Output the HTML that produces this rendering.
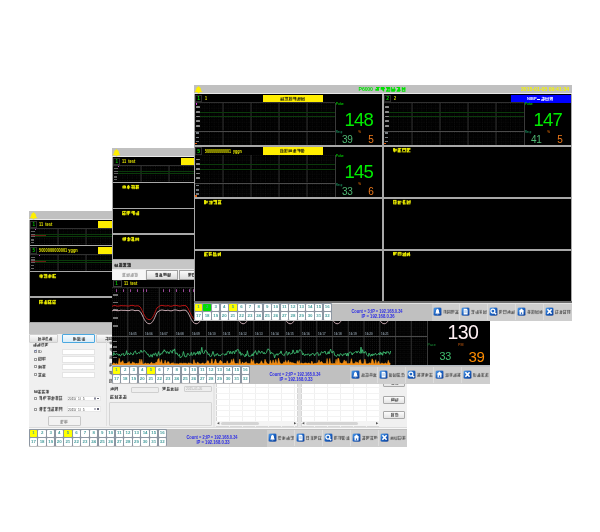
<!DOCTYPE html><html><head><meta charset="utf-8"><style>
html,body{margin:0;padding:0;background:#fff;width:600px;height:532px;overflow:hidden;}
body{position:relative;font-family:"Liberation Sans",sans-serif;}
.win{position:absolute;width:378px;height:236px;overflow:hidden;will-change:transform;}
.t{position:absolute;white-space:nowrap;line-height:1;}
.cj{position:absolute;background:repeating-linear-gradient(90deg,var(--c) 0 calc(var(--cw) - 1px),transparent calc(var(--cw) - 1px) var(--cw));opacity:.6;}
.cjx{display:inline-block;height:0.75em;background:repeating-linear-gradient(90deg,currentColor 0 4.5px,transparent 4.5px 6px);vertical-align:-0.05em;}
.cn{position:absolute;left:0;top:1.5px;width:100%;text-align:center;font-size:4.4px;font-weight:bold;line-height:1;color:#4aa0a0;}
</style></head><body>
<div class="win" style="left:29px;top:211px;"><div style="position:absolute;left:0px;top:0px;width:378px;height:236px;background:#c0c0c0;"></div><div style="position:absolute;left:0px;top:0px;width:378px;height:8.5px;background:#c0c0c0;"></div><div style="position:absolute;left:0px;top:8.2px;width:378px;height:1px;background:#e8e8e8;"></div><svg style="position:absolute;left:-0.3px;top:0.4px;overflow:visible" width="9" height="9" viewBox="0 0 9 9"><path d="M4.5 0.7 L5.1 1.6 C6.6 2 7.1 3.4 7.3 4.8 C7.5 5.9 8.1 6.5 8.7 7 L8.7 7.6 L5.7 7.6 C5.5 8.3 5.1 8.6 4.5 8.6 C3.9 8.6 3.5 8.3 3.3 7.6 L0.3 7.6 L0.3 7 C0.9 6.5 1.5 5.9 1.7 4.8 C1.9 3.4 2.4 2 3.9 1.6Z" fill="#fff000" stroke="#aab0f0" stroke-width="0.45"/></svg><div style="position:absolute;left:0px;top:9.2px;width:378px;height:103px;background:#a8a8a8;"></div><div style="position:absolute;left:1px;top:9.3px;width:187px;height:24.5px;background:#000;"></div><div style="position:absolute;left:0.7px;top:9.9px;width:7.8px;height:7.4px;border:0.8px solid #2e2e2e;box-sizing:border-box;"></div><div class="t" style="left:3.4px;top:11.9px;font-size:4.6px;color:#00c000;font-weight:bold;">1</div><div class="t" style="left:10.2px;top:12.0px;font-size:4.9px;color:#e8e800;font-weight:bold;transform:scaleX(0.8);transform-origin:0 0;">11&nbsp;&nbsp;test</div><div style="position:absolute;left:69px;top:9.8px;width:60px;height:7.6px;background:#ffee00;"></div><div style="position:absolute;left:1px;top:17.4px;width:187px;height:0.6px;background:#303030;"></div><svg style="position:absolute;left:1px;top:18.0px" width="187" height="15.8" viewBox="0 0 187 15.8"><defs><pattern id="gp1" patternUnits="userSpaceOnUse" width="4.67" height="4.67"><rect x="0" y="0" width="0.9" height="0.9" fill="#171717"/><rect x="2.335" y="0" width="0.9" height="0.9" fill="#171717"/><rect x="0" y="2.335" width="0.9" height="0.9" fill="#171717"/><rect x="2.335" y="2.335" width="0.9" height="0.9" fill="#171717" opacity="0.5"/></pattern></defs><rect width="187" height="15.8" fill="#000"/><rect width="187" height="15.8" fill="url(#gp1)"/><rect x="27.50" y="0" width="1" height="15.8" fill="#333333"/><rect x="55.50" y="0" width="1" height="15.8" fill="#333333"/><rect x="83.50" y="0" width="1" height="15.8" fill="#333333"/><rect x="111.50" y="0" width="1" height="15.8" fill="#333333"/><rect x="139.50" y="0" width="1" height="15.8" fill="#333333"/><rect x="167.50" y="0" width="1" height="15.8" fill="#333333"/></svg><div style="position:absolute;left:6px;top:22.8px;width:182px;height:0.8px;background:#0b3a0b;"></div><div style="position:absolute;left:6px;top:25.3px;width:182px;height:0.8px;background:#0b3a0b;"></div><div style="position:absolute;left:2px;top:23.8px;width:15px;height:0.7px;background:#6a1414;"></div><div style="position:absolute;left:6px;top:18.3px;width:1px;height:1px;background:#c050c0;"></div><div style="position:absolute;left:1.6px;top:19.8px;width:4.5px;height:1.3px;background:#8a8a8a;opacity:.7"></div><div style="position:absolute;left:1.6px;top:22.6px;width:4.5px;height:1.3px;background:#8a8a8a;opacity:.7"></div><div style="position:absolute;left:1.6px;top:25.1px;width:4.5px;height:1.3px;background:#8a8a8a;opacity:.7"></div><div style="position:absolute;left:1.6px;top:28.3px;width:3.5px;height:1.3px;background:#8a8a8a;opacity:.7"></div><div style="position:absolute;left:1.6px;top:30.8px;width:3.5px;height:1.3px;background:#8a8a8a;opacity:.7"></div><div style="position:absolute;left:190px;top:9.3px;width:187px;height:24.5px;background:#000;"></div><div style="position:absolute;left:1px;top:35.1px;width:187px;height:24.5px;background:#000;"></div><div style="position:absolute;left:0.7px;top:35.7px;width:7.8px;height:7.4px;border:0.8px solid #2e2e2e;box-sizing:border-box;"></div><div class="t" style="left:3.4px;top:37.7px;font-size:4.6px;color:#00c000;font-weight:bold;">5</div><div class="t" style="left:10.2px;top:37.800000000000004px;font-size:4.9px;color:#e8e800;font-weight:bold;transform:scaleX(0.8);transform-origin:0 0;">5000000000001&nbsp;yggn</div><div style="position:absolute;left:69px;top:35.6px;width:60px;height:7.6px;background:#ffee00;"></div><div style="position:absolute;left:1px;top:43.2px;width:187px;height:0.6px;background:#303030;"></div><svg style="position:absolute;left:1px;top:43.8px" width="187" height="15.8" viewBox="0 0 187 15.8"><defs><pattern id="gp2" patternUnits="userSpaceOnUse" width="4.67" height="4.67"><rect x="0" y="0" width="0.9" height="0.9" fill="#171717"/><rect x="2.335" y="0" width="0.9" height="0.9" fill="#171717"/><rect x="0" y="2.335" width="0.9" height="0.9" fill="#171717"/><rect x="2.335" y="2.335" width="0.9" height="0.9" fill="#171717" opacity="0.5"/></pattern></defs><rect width="187" height="15.8" fill="#000"/><rect width="187" height="15.8" fill="url(#gp2)"/><rect x="27.50" y="0" width="1" height="15.8" fill="#333333"/><rect x="55.50" y="0" width="1" height="15.8" fill="#333333"/><rect x="83.50" y="0" width="1" height="15.8" fill="#333333"/><rect x="111.50" y="0" width="1" height="15.8" fill="#333333"/><rect x="139.50" y="0" width="1" height="15.8" fill="#333333"/><rect x="167.50" y="0" width="1" height="15.8" fill="#333333"/></svg><div style="position:absolute;left:6px;top:48.6px;width:182px;height:0.8px;background:#0b3a0b;"></div><div style="position:absolute;left:6px;top:51.1px;width:182px;height:0.8px;background:#0b3a0b;"></div><div style="position:absolute;left:2px;top:49.6px;width:15px;height:0.7px;background:#6a1414;"></div><div style="position:absolute;left:10px;top:44.1px;width:1px;height:1px;background:#c050c0;"></div><div style="position:absolute;left:1.6px;top:45.6px;width:4.5px;height:1.3px;background:#8a8a8a;opacity:.7"></div><div style="position:absolute;left:1.6px;top:48.400000000000006px;width:4.5px;height:1.3px;background:#8a8a8a;opacity:.7"></div><div style="position:absolute;left:1.6px;top:50.900000000000006px;width:4.5px;height:1.3px;background:#8a8a8a;opacity:.7"></div><div style="position:absolute;left:1.6px;top:54.1px;width:3.5px;height:1.3px;background:#8a8a8a;opacity:.7"></div><div style="position:absolute;left:1.6px;top:56.6px;width:3.5px;height:1.3px;background:#8a8a8a;opacity:.7"></div><div style="position:absolute;left:190px;top:35.1px;width:187px;height:24.5px;background:#000;"></div><div style="position:absolute;left:1px;top:60.9px;width:187px;height:24.5px;background:#000;"></div><svg style="position:absolute;left:10px;top:62.699999999999996px;overflow:visible;opacity:1.0;filter:blur(0.25px);" width="17.6" height="4.2" viewBox="0 0 17.6 4.2"><path d="M0.26 1.26H3.87M0.26 2.10H3.87M0.26 2.94H3.87M2.79 0.84V4.20M2.07 0.00V4.20M4.66 0.42H8.27M5.21 3.78H7.73M4.66 1.26H7.73M7.19 0.00V3.36M7.91 0.84V4.20M5.02 3.99L6.47 1.68M9.06 2.94H12.67M9.61 1.26H12.67M9.61 2.10H12.67M10.15 0.84V4.20M10.87 0.00V4.20M13.46 3.78H17.07M14.01 0.42H17.07M13.46 2.94H17.07M13.82 0.00V3.36M14.55 0.00V3.36M13.82 3.99L15.27 1.68" stroke="#eeee00" stroke-width="0.92" fill="none"/></svg><div style="position:absolute;left:190px;top:60.9px;width:187px;height:24.5px;background:#000;"></div><div style="position:absolute;left:1px;top:86.7px;width:187px;height:24.5px;background:#000;"></div><svg style="position:absolute;left:10px;top:88.5px;overflow:visible;opacity:1.0;filter:blur(0.25px);" width="17.6" height="4.2" viewBox="0 0 17.6 4.2"><path d="M0.26 2.10H3.87M0.26 2.94H3.87M0.26 0.42H3.87M2.79 0.00V4.20M0.62 0.00V4.20M5.21 3.78H8.27M5.21 2.10H7.73M4.66 2.94H8.27M7.91 0.00V4.20M6.47 0.00V4.20M9.06 3.78H12.67M9.06 2.94H12.67M9.61 0.42H12.67M9.42 0.00V3.36M11.59 0.00V4.20M9.42 3.99L10.87 1.68M14.01 0.42H17.07M14.01 2.94H16.53M13.46 3.78H16.53M13.82 0.00V3.36M15.99 0.00V4.20M13.82 3.99L15.27 1.68" stroke="#eeee00" stroke-width="0.92" fill="none"/></svg><div style="position:absolute;left:190px;top:86.7px;width:187px;height:24.5px;background:#000;"></div><div style="position:absolute;left:0px;top:112px;width:378px;height:10.5px;background:#c2c2c2;"></div><div style="position:absolute;left:0px;top:122.5px;width:378px;height:94.5px;background:#f0f0f0;"></div><div style="position:absolute;left:0.2px;top:123.0px;width:29px;height:8.8px;background:linear-gradient(#fbfbfb,#e0e0e0);border:0.6px solid #cfcfcf;box-sizing:border-box;border-radius:1px;"></div><svg style="position:absolute;left:9px;top:125.5px;overflow:visible;opacity:1.0;filter:blur(0.25px);" width="14.4" height="3.6" viewBox="0 0 14.4 3.6"><path d="M0.66 1.08H2.73M0.66 1.80H3.17M0.22 3.24H3.17M0.51 0.00V3.60M2.28 0.72V2.88M0.51 3.42L1.69 1.44M4.26 1.80H6.33M4.26 0.36H6.77M3.82 2.52H6.77M6.47 0.72V2.88M5.29 0.72V3.60M7.42 3.24H10.37M7.86 1.08H9.93M7.86 0.36H9.93M8.89 0.00V2.88M7.71 0.72V2.88M11.46 3.24H13.97M11.02 1.80H13.97M11.02 2.52H13.97M13.67 0.00V3.60M12.49 0.00V2.88M11.31 3.42L12.49 1.44" stroke="#444" stroke-width="0.60" fill="none"/></svg><div style="position:absolute;left:33px;top:122.6px;width:33px;height:9.6px;background:linear-gradient(#f4fbff,#d8ecf8);border:0.8px solid #4aa8e0;box-sizing:border-box;border-radius:1px;"></div><svg style="position:absolute;left:43.5px;top:125.6px;overflow:visible;opacity:1.0;filter:blur(0.25px);" width="12.6" height="3.8" viewBox="0 0 12.6 3.8"><path d="M0.77 1.14H3.18M0.77 2.66H3.70M0.25 1.90H3.18M1.29 0.00V3.80M0.60 0.00V3.80M4.45 3.42H7.90M4.45 1.90H7.90M4.45 0.38H7.38M6.17 0.76V3.80M4.80 0.00V3.80M4.80 3.61L6.17 1.52M8.65 2.66H12.10M8.65 1.14H12.10M9.17 3.42H12.10M11.06 0.00V3.80M10.37 0.76V3.80" stroke="#444" stroke-width="0.62" fill="none"/></svg><div style="position:absolute;left:67px;top:123.0px;width:30px;height:8.8px;background:linear-gradient(#fbfbfb,#e0e0e0);border:0.6px solid #cfcfcf;box-sizing:border-box;border-radius:1px;"></div><svg style="position:absolute;left:75.5px;top:125.5px;overflow:visible;opacity:1.0;filter:blur(0.25px);" width="11.4" height="3.6" viewBox="0 0 11.4 3.6"><path d="M0.23 2.52H3.34M0.70 3.24H2.88M0.70 0.36H3.34M2.41 0.00V2.88M3.03 0.00V3.60M4.50 0.36H7.14M4.50 1.80H6.68M4.03 2.52H6.68M6.83 0.00V3.60M4.34 0.00V2.88M7.83 3.24H10.94M8.30 1.08H10.94M7.83 1.80H10.94M10.63 0.72V3.60M8.14 0.00V3.60" stroke="#444" stroke-width="0.62" fill="none"/></svg><svg style="position:absolute;left:4px;top:131.6px;overflow:visible;opacity:1.0;filter:blur(0.25px);" width="15.6" height="3.6" viewBox="0 0 15.6 3.6"><path d="M0.23 1.80H2.95M0.23 2.52H3.43M0.23 3.24H3.43M3.11 0.00V2.88M2.47 0.00V3.60M4.61 1.80H7.33M4.13 3.24H7.33M4.13 2.52H6.85M7.01 0.00V2.88M6.37 0.00V2.88M4.45 3.42L5.73 1.44M8.51 3.24H10.75M8.51 0.36H11.23M8.51 1.08H10.75M10.27 0.00V2.88M8.35 0.72V2.88M12.41 1.08H15.13M12.41 0.36H15.13M12.41 2.52H14.65M12.25 0.00V3.60M13.53 0.00V2.88M12.25 3.42L13.53 1.44" stroke="#444" stroke-width="0.62" fill="none"/></svg><div style="position:absolute;left:5px;top:139.0px;width:3px;height:3px;border:0.5px solid #9a9a9a;background:#fafafa;box-sizing:border-box;"></div><div class="t" style="left:4.6px;top:138.2px;font-size:4px;color:#3050c0;">&#10003;</div><div class="t" style="left:9px;top:138.5px;font-size:4px;color:#222;">ID</div><div style="position:absolute;left:33px;top:137.7px;width:33px;height:6.4px;background:#fff;border:0.5px solid #e4e4e4;box-sizing:border-box;"></div><div style="position:absolute;left:5px;top:146.7px;width:3px;height:3px;border:0.5px solid #9a9a9a;background:#fafafa;box-sizing:border-box;"></div><svg style="position:absolute;left:9px;top:146.39999999999998px;overflow:visible;opacity:1.0;filter:blur(0.25px);" width="8.2" height="3.8" viewBox="0 0 8.2 3.8"><path d="M0.25 0.38H3.61M0.25 3.42H3.10M0.25 1.90H3.61M3.27 0.00V3.80M0.58 0.76V3.04M0.58 3.61L1.93 1.52M4.85 2.66H7.71M4.85 1.14H7.71M4.85 0.38H7.71M4.68 0.00V3.04M5.35 0.76V3.80" stroke="#444" stroke-width="0.62" fill="none"/></svg><div style="position:absolute;left:33px;top:145.39999999999998px;width:33px;height:6.4px;background:#fff;border:0.5px solid #e4e4e4;box-sizing:border-box;"></div><div style="position:absolute;left:5px;top:154.4px;width:3px;height:3px;border:0.5px solid #9a9a9a;background:#fafafa;box-sizing:border-box;"></div><svg style="position:absolute;left:9px;top:154.1px;overflow:visible;opacity:1.0;filter:blur(0.25px);" width="8.2" height="3.8" viewBox="0 0 8.2 3.8"><path d="M0.25 1.14H3.61M0.75 2.66H3.61M0.25 1.90H3.61M1.25 0.00V3.80M3.27 0.76V3.80M0.58 3.61L1.93 1.52M4.85 1.14H7.20M4.35 2.66H7.20M4.35 0.38H7.71M5.35 0.00V3.80M6.70 0.00V3.80" stroke="#444" stroke-width="0.62" fill="none"/></svg><div style="position:absolute;left:33px;top:153.1px;width:33px;height:6.4px;background:#fff;border:0.5px solid #e4e4e4;box-sizing:border-box;"></div><div style="position:absolute;left:5px;top:162.1px;width:3px;height:3px;border:0.5px solid #9a9a9a;background:#fafafa;box-sizing:border-box;"></div><svg style="position:absolute;left:9px;top:161.79999999999998px;overflow:visible;opacity:1.0;filter:blur(0.25px);" width="8.2" height="3.8" viewBox="0 0 8.2 3.8"><path d="M0.25 3.42H3.61M0.75 2.66H3.10M0.25 0.38H3.61M1.25 0.00V3.80M2.60 0.00V3.04M4.85 3.42H7.71M4.85 1.14H7.71M4.85 2.66H7.20M6.03 0.00V3.80M4.68 0.76V3.80M4.68 3.61L6.03 1.52" stroke="#444" stroke-width="0.62" fill="none"/></svg><div style="position:absolute;left:33px;top:160.79999999999998px;width:33px;height:6.4px;background:#fff;border:0.5px solid #e4e4e4;box-sizing:border-box;"></div><svg style="position:absolute;left:5px;top:178.7px;overflow:visible;opacity:1.0;filter:blur(0.25px);" width="15.6" height="3.6" viewBox="0 0 15.6 3.6"><path d="M0.23 1.08H3.43M0.71 1.80H3.43M0.71 2.52H3.43M3.11 0.00V2.88M0.55 0.00V2.88M4.13 2.52H6.85M4.13 0.36H7.33M4.61 3.24H7.33M5.09 0.72V3.60M5.73 0.00V3.60M4.45 3.42L5.73 1.44M8.03 0.36H11.23M8.03 2.52H11.23M8.03 3.24H11.23M9.63 0.00V2.88M8.35 0.00V3.60M12.41 2.52H14.65M11.93 1.08H15.13M11.93 0.36H14.65M14.17 0.72V3.60M13.53 0.00V3.60M12.25 3.42L13.53 1.44" stroke="#444" stroke-width="0.62" fill="none"/></svg><div style="position:absolute;left:5px;top:185.8px;width:3px;height:3px;border:0.5px solid #9a9a9a;background:#fafafa;box-sizing:border-box;"></div><svg style="position:absolute;left:10.4px;top:185.10000000000002px;overflow:visible;opacity:1.0;filter:blur(0.25px);" width="23.7" height="4.3" viewBox="0 0 23.7 4.3"><path d="M0.24 1.29H2.99M0.24 0.43H2.99M0.24 3.01H3.48M2.50 0.86V4.30M1.86 0.00V3.44M4.19 1.29H7.43M4.19 2.15H6.94M4.67 0.43H7.43M4.51 0.86V3.44M5.16 0.86V4.30M8.62 3.01H11.38M8.14 0.43H11.38M8.62 2.15H11.38M11.05 0.00V3.44M9.76 0.00V4.30M12.57 3.87H14.84M12.09 1.29H15.33M12.57 2.15H15.33M13.71 0.00V4.30M15.00 0.86V3.44M12.41 4.08L13.71 1.72M16.52 0.43H19.28M16.52 1.29H19.28M16.04 3.01H19.28M17.66 0.00V4.30M18.30 0.86V4.30M20.47 3.01H23.23M19.99 0.43H23.23M19.99 3.87H23.23M22.25 0.00V3.44M20.31 0.00V4.30" stroke="#444" stroke-width="0.62" fill="none"/></svg><div style="position:absolute;left:38px;top:184.5px;width:34px;height:5.8px;background:#fff;border:0.5px solid #e8e8e8;box-sizing:border-box;"></div><div class="t" style="left:39.3px;top:186.10000000000002px;font-size:3.9px;color:#3a3a3a;transform:scaleX(0.85);transform-origin:0 0;">2015/&nbsp;&nbsp;1/&nbsp;&nbsp;5</div><div style="position:absolute;left:64.8px;top:185.8px;width:2.6px;height:2.8px;border:0.5px solid #889;border-radius:1px;box-sizing:border-box;"></div><div style="position:absolute;left:68px;top:186.70000000000002px;width:2px;height:1.2px;background:#667;"></div><div style="position:absolute;left:5px;top:196.5px;width:3px;height:3px;border:0.5px solid #9a9a9a;background:#fafafa;box-sizing:border-box;"></div><svg style="position:absolute;left:10.4px;top:195.8px;overflow:visible;opacity:1.0;filter:blur(0.25px);" width="23.7" height="4.3" viewBox="0 0 23.7 4.3"><path d="M0.72 0.43H3.48M0.24 1.29H3.48M0.24 2.15H3.48M2.50 0.00V4.30M1.86 0.00V4.30M0.56 4.08L1.86 1.72M4.67 3.87H6.94M4.67 0.43H7.43M4.67 1.29H6.94M5.16 0.00V4.30M5.81 0.00V4.30M8.62 3.87H11.38M8.14 1.29H10.89M8.62 0.43H10.89M10.40 0.86V3.44M11.05 0.00V4.30M12.09 3.01H14.84M12.57 3.87H15.33M12.57 0.43H15.33M14.35 0.00V3.44M13.06 0.86V4.30M12.41 4.08L13.71 1.72M16.04 3.01H19.28M16.04 0.43H19.28M16.04 1.29H19.28M17.66 0.00V4.30M17.01 0.00V3.44M16.36 4.08L17.66 1.72M19.99 1.29H23.23M19.99 0.43H23.23M20.47 2.15H22.74M20.31 0.00V4.30M22.90 0.00V4.30" stroke="#444" stroke-width="0.62" fill="none"/></svg><div style="position:absolute;left:38px;top:195.2px;width:34px;height:5.8px;background:#fff;border:0.5px solid #e8e8e8;box-sizing:border-box;"></div><div class="t" style="left:39.3px;top:196.8px;font-size:3.9px;color:#3a3a3a;transform:scaleX(0.85);transform-origin:0 0;">2015/&nbsp;&nbsp;1/&nbsp;&nbsp;5</div><div style="position:absolute;left:64.8px;top:196.5px;width:2.6px;height:2.8px;border:0.5px solid #889;border-radius:1px;box-sizing:border-box;"></div><div style="position:absolute;left:68px;top:197.4px;width:2px;height:1.2px;background:#667;"></div><div style="position:absolute;left:19px;top:204.6px;width:32.5px;height:10.6px;background:#f2f2f2;border:0.7px solid #c8c8c8;box-sizing:border-box;border-radius:1px;"></div><svg style="position:absolute;left:31px;top:208.6px;overflow:visible;opacity:1.0;filter:blur(0.25px);" width="8.0" height="3.6" viewBox="0 0 8.0 3.6"><path d="M0.73 3.24H3.03M0.24 1.08H3.52M0.73 0.36H3.52M1.88 0.00V3.60M1.22 0.72V3.60M0.57 3.42L1.88 1.44M4.24 2.52H7.52M4.24 0.36H7.52M4.24 1.80H7.52M5.22 0.72V3.60M5.88 0.72V3.60" stroke="#999" stroke-width="0.80" fill="none"/></svg><div style="position:absolute;left:76.6px;top:129px;width:0.9px;height:86px;background:#e0e0e0;"></div><svg style="position:absolute;left:80.3px;top:130.4px;overflow:visible;opacity:1.0;filter:blur(0.25px);" width="4.2" height="3.8" viewBox="0 0 4.2 3.8"><path d="M0.77 1.14H3.18M0.25 1.90H3.70M0.77 2.66H3.18M3.35 0.00V3.04M1.97 0.76V3.80" stroke="#555" stroke-width="0.60" fill="none"/></svg><svg style="position:absolute;left:80.3px;top:137.1px;overflow:visible;opacity:1.0;filter:blur(0.25px);" width="4.2" height="3.8" viewBox="0 0 4.2 3.8"><path d="M0.77 1.90H3.18M0.77 0.38H3.18M0.77 1.14H3.18M1.97 0.00V3.04M2.66 0.00V3.80" stroke="#555" stroke-width="0.60" fill="none"/></svg><svg style="position:absolute;left:80.3px;top:144.4px;overflow:visible;opacity:1.0;filter:blur(0.25px);" width="4.2" height="3.8" viewBox="0 0 4.2 3.8"><path d="M0.25 1.14H3.18M0.77 3.42H3.18M0.25 2.66H3.18M1.97 0.00V3.04M2.66 0.76V3.80M0.60 3.61L1.97 1.52" stroke="#555" stroke-width="0.60" fill="none"/></svg><svg style="position:absolute;left:80.3px;top:152.29999999999998px;overflow:visible;opacity:1.0;filter:blur(0.25px);" width="4.2" height="3.8" viewBox="0 0 4.2 3.8"><path d="M0.25 2.66H3.70M0.77 0.38H3.18M0.25 1.90H3.18M1.29 0.76V3.80M1.97 0.00V3.04M0.60 3.61L1.97 1.52" stroke="#555" stroke-width="0.60" fill="none"/></svg><svg style="position:absolute;left:80.3px;top:160.29999999999998px;overflow:visible;opacity:1.0;filter:blur(0.25px);" width="4.2" height="3.8" viewBox="0 0 4.2 3.8"><path d="M0.77 2.66H3.70M0.25 1.14H3.70M0.25 0.38H3.70M1.29 0.00V3.04M2.66 0.76V3.80" stroke="#555" stroke-width="0.60" fill="none"/></svg><svg style="position:absolute;left:80.3px;top:167.6px;overflow:visible;opacity:1.0;filter:blur(0.25px);" width="4.2" height="3.8" viewBox="0 0 4.2 3.8"><path d="M0.25 3.42H3.70M0.25 0.38H3.70M0.25 1.14H3.18M2.66 0.76V3.04M0.60 0.76V3.80M0.60 3.61L1.97 1.52" stroke="#555" stroke-width="0.60" fill="none"/></svg><svg style="position:absolute;left:80.5px;top:175.5px;overflow:visible;opacity:1.0;filter:blur(0.25px);" width="8.4" height="3.8" viewBox="0 0 8.4 3.8"><path d="M0.25 1.90H3.70M0.77 1.14H3.70M0.77 2.66H3.18M2.66 0.00V3.04M3.35 0.76V3.04M0.60 3.61L1.97 1.52M4.45 0.38H7.90M4.45 1.90H7.90M4.97 1.14H7.90M7.55 0.00V3.80M4.80 0.76V3.80M4.80 3.61L6.17 1.52" stroke="#444" stroke-width="0.62" fill="none"/></svg><div style="position:absolute;left:101.5px;top:175.6px;width:28.5px;height:6.4px;background:#eeeeee;border:0.6px solid #cfcfcf;box-sizing:border-box;border-radius:1px;"></div><svg style="position:absolute;left:133px;top:175.5px;overflow:visible;opacity:1.0;filter:blur(0.25px);" width="16.8" height="3.8" viewBox="0 0 16.8 3.8"><path d="M0.25 1.14H3.70M0.25 0.38H3.70M0.77 1.90H3.70M1.97 0.76V3.04M2.66 0.00V3.04M0.60 3.61L1.97 1.52M4.45 3.42H7.90M4.97 0.38H7.38M4.97 2.66H7.90M6.86 0.00V3.80M5.49 0.00V3.80M8.65 1.14H11.58M8.65 3.42H12.10M8.65 1.90H12.10M9.69 0.76V3.80M10.37 0.76V3.04M9.00 3.61L10.37 1.52M12.85 2.66H16.30M12.85 1.14H15.78M12.85 3.42H16.30M13.20 0.00V3.80M15.95 0.00V3.04" stroke="#444" stroke-width="0.62" fill="none"/></svg><div style="position:absolute;left:155px;top:174.6px;width:28px;height:6.4px;background:#eeeeee;border:0.6px solid #cfcfcf;box-sizing:border-box;border-radius:1px;"></div><div class="t" style="left:157px;top:176.5px;font-size:3.2px;color:#aaa;">2015-01-05</div><svg style="position:absolute;left:80.5px;top:183.8px;overflow:visible;opacity:1.0;filter:blur(0.25px);" width="16.8" height="3.8" viewBox="0 0 16.8 3.8"><path d="M0.25 0.38H3.70M0.25 3.42H3.70M0.25 2.66H3.70M0.60 0.76V3.80M1.97 0.00V3.80M0.60 3.61L1.97 1.52M4.97 2.66H7.90M4.45 1.14H7.90M4.97 3.42H7.90M7.55 0.00V3.80M5.49 0.00V3.04M4.80 3.61L6.17 1.52M8.65 0.38H11.58M9.17 3.42H11.58M9.17 2.66H12.10M11.06 0.00V3.04M10.37 0.00V3.80M9.00 3.61L10.37 1.52M13.37 0.38H16.30M12.85 2.66H16.30M12.85 3.42H16.30M14.57 0.00V3.80M15.95 0.76V3.80M13.20 3.61L14.57 1.52" stroke="#444" stroke-width="0.62" fill="none"/></svg><div style="position:absolute;left:80.3px;top:190.8px;width:102.5px;height:24.5px;background:#eeeeee;border:0.7px solid #d4d4d4;box-sizing:border-box;border-radius:1px;"></div><div style="position:absolute;left:184px;top:122.5px;width:1.5px;height:94.5px;background:#e6e6e6;"></div><div style="position:absolute;left:186.5px;top:124px;width:82.5px;height:91.5px;background:#fff;border:0.6px solid #d6d6d6;box-sizing:border-box;"></div><div style="position:absolute;left:199.5px;top:124px;width:0.5px;height:95px;background:#f0f0f0;"></div><div style="position:absolute;left:212.5px;top:124px;width:0.5px;height:95px;background:#f0f0f0;"></div><div style="position:absolute;left:225.5px;top:124px;width:0.5px;height:95px;background:#f0f0f0;"></div><div style="position:absolute;left:238.5px;top:124px;width:0.5px;height:95px;background:#f0f0f0;"></div><div style="position:absolute;left:251.5px;top:124px;width:0.5px;height:95px;background:#f0f0f0;"></div><div style="position:absolute;left:264.5px;top:124px;width:0.5px;height:95px;background:#f0f0f0;"></div><div style="position:absolute;left:186.5px;top:129.8px;width:82.5px;height:0.5px;background:#f3f3f3;"></div><div style="position:absolute;left:186.5px;top:135.6px;width:82.5px;height:0.5px;background:#f3f3f3;"></div><div style="position:absolute;left:186.5px;top:141.4px;width:82.5px;height:0.5px;background:#f3f3f3;"></div><div style="position:absolute;left:186.5px;top:147.2px;width:82.5px;height:0.5px;background:#f3f3f3;"></div><div style="position:absolute;left:186.5px;top:153.0px;width:82.5px;height:0.5px;background:#f3f3f3;"></div><div style="position:absolute;left:186.5px;top:158.8px;width:82.5px;height:0.5px;background:#f3f3f3;"></div><div style="position:absolute;left:186.5px;top:164.6px;width:82.5px;height:0.5px;background:#f3f3f3;"></div><div style="position:absolute;left:186.5px;top:170.4px;width:82.5px;height:0.5px;background:#f3f3f3;"></div><div style="position:absolute;left:186.5px;top:176.2px;width:82.5px;height:0.5px;background:#f3f3f3;"></div><div style="position:absolute;left:186.5px;top:182.0px;width:82.5px;height:0.5px;background:#f3f3f3;"></div><div style="position:absolute;left:186.5px;top:187.8px;width:82.5px;height:0.5px;background:#f3f3f3;"></div><div style="position:absolute;left:186.5px;top:193.6px;width:82.5px;height:0.5px;background:#f3f3f3;"></div><div style="position:absolute;left:186.5px;top:199.39999999999998px;width:82.5px;height:0.5px;background:#f3f3f3;"></div><div style="position:absolute;left:186.5px;top:205.2px;width:82.5px;height:0.5px;background:#f3f3f3;"></div><div style="position:absolute;left:186.5px;top:211.0px;width:82.5px;height:0.5px;background:#f3f3f3;"></div><div style="position:absolute;left:186.5px;top:216.8px;width:82.5px;height:0.5px;background:#f3f3f3;"></div><div style="position:absolute;left:186.5px;top:222.6px;width:82.5px;height:0.5px;background:#f3f3f3;"></div><div style="position:absolute;left:187.1px;top:210.4px;width:81.3px;height:4.6px;background:#f4f4f4;"></div><div style="position:absolute;left:191.5px;top:211.2px;width:38px;height:3.2px;background:#d4d4d4;border-radius:1.5px;"></div><div class="t" style="left:187.5px;top:210.6px;font-size:2.8px;color:#555;">&#9664;</div><div class="t" style="left:265.0px;top:210.6px;font-size:2.8px;color:#555;">&#9654;</div><div style="position:absolute;left:272px;top:124px;width:79px;height:91.5px;background:#fff;border:0.6px solid #d6d6d6;box-sizing:border-box;"></div><div style="position:absolute;left:285px;top:124px;width:0.5px;height:95px;background:#f0f0f0;"></div><div style="position:absolute;left:298px;top:124px;width:0.5px;height:95px;background:#f0f0f0;"></div><div style="position:absolute;left:311px;top:124px;width:0.5px;height:95px;background:#f0f0f0;"></div><div style="position:absolute;left:324px;top:124px;width:0.5px;height:95px;background:#f0f0f0;"></div><div style="position:absolute;left:337px;top:124px;width:0.5px;height:95px;background:#f0f0f0;"></div><div style="position:absolute;left:350px;top:124px;width:0.5px;height:95px;background:#f0f0f0;"></div><div style="position:absolute;left:272px;top:129.8px;width:79px;height:0.5px;background:#f3f3f3;"></div><div style="position:absolute;left:272px;top:135.6px;width:79px;height:0.5px;background:#f3f3f3;"></div><div style="position:absolute;left:272px;top:141.4px;width:79px;height:0.5px;background:#f3f3f3;"></div><div style="position:absolute;left:272px;top:147.2px;width:79px;height:0.5px;background:#f3f3f3;"></div><div style="position:absolute;left:272px;top:153.0px;width:79px;height:0.5px;background:#f3f3f3;"></div><div style="position:absolute;left:272px;top:158.8px;width:79px;height:0.5px;background:#f3f3f3;"></div><div style="position:absolute;left:272px;top:164.6px;width:79px;height:0.5px;background:#f3f3f3;"></div><div style="position:absolute;left:272px;top:170.4px;width:79px;height:0.5px;background:#f3f3f3;"></div><div style="position:absolute;left:272px;top:176.2px;width:79px;height:0.5px;background:#f3f3f3;"></div><div style="position:absolute;left:272px;top:182.0px;width:79px;height:0.5px;background:#f3f3f3;"></div><div style="position:absolute;left:272px;top:187.8px;width:79px;height:0.5px;background:#f3f3f3;"></div><div style="position:absolute;left:272px;top:193.6px;width:79px;height:0.5px;background:#f3f3f3;"></div><div style="position:absolute;left:272px;top:199.39999999999998px;width:79px;height:0.5px;background:#f3f3f3;"></div><div style="position:absolute;left:272px;top:205.2px;width:79px;height:0.5px;background:#f3f3f3;"></div><div style="position:absolute;left:272px;top:211.0px;width:79px;height:0.5px;background:#f3f3f3;"></div><div style="position:absolute;left:272px;top:216.8px;width:79px;height:0.5px;background:#f3f3f3;"></div><div style="position:absolute;left:272px;top:222.6px;width:79px;height:0.5px;background:#f3f3f3;"></div><div style="position:absolute;left:272.6px;top:210.4px;width:77.8px;height:4.6px;background:#f4f4f4;"></div><div style="position:absolute;left:277px;top:211.2px;width:52px;height:3.2px;background:#d4d4d4;border-radius:1.5px;"></div><div class="t" style="left:273px;top:210.6px;font-size:2.8px;color:#555;">&#9664;</div><div class="t" style="left:347px;top:210.6px;font-size:2.8px;color:#555;">&#9654;</div><div style="position:absolute;left:269.2px;top:122.5px;width:2.5px;height:94.5px;background:#e4e4e4;"></div><div style="position:absolute;left:351.5px;top:122.5px;width:26.5px;height:94.5px;background:#f0f0f0;"></div><div style="position:absolute;left:354px;top:167.5px;width:22px;height:8.2px;background:linear-gradient(#fcfcfc,#e4e4e4);border:0.7px solid #a8a8a8;box-sizing:border-box;border-radius:1px;"></div><svg style="position:absolute;left:361.5px;top:169.9px;overflow:visible;opacity:1.0;filter:blur(0.25px);" width="7.6" height="3.6" viewBox="0 0 7.6 3.6"><path d="M0.70 2.52H2.88M0.70 3.24H3.34M0.23 1.80H2.88M1.79 0.00V3.60M2.41 0.72V3.60M0.54 3.42L1.79 1.44M4.03 1.80H7.14M4.50 3.24H7.14M4.03 2.52H7.14M6.21 0.00V2.88M6.83 0.72V3.60M4.34 3.42L5.59 1.44" stroke="#444" stroke-width="0.60" fill="none"/></svg><div style="position:absolute;left:354px;top:185px;width:22px;height:8.2px;background:linear-gradient(#fcfcfc,#e4e4e4);border:0.7px solid #a8a8a8;box-sizing:border-box;border-radius:1px;"></div><svg style="position:absolute;left:361.5px;top:187.4px;overflow:visible;opacity:1.0;filter:blur(0.25px);" width="7.6" height="3.6" viewBox="0 0 7.6 3.6"><path d="M0.23 1.80H3.34M0.70 2.52H3.34M0.23 0.36H3.34M0.54 0.72V2.88M3.03 0.00V2.88M0.54 3.42L1.79 1.44M4.50 3.24H6.68M4.03 2.52H6.68M4.50 1.08H7.14M6.83 0.00V2.88M4.34 0.72V3.60" stroke="#444" stroke-width="0.60" fill="none"/></svg><div style="position:absolute;left:354px;top:200px;width:22px;height:8.2px;background:linear-gradient(#fcfcfc,#e4e4e4);border:0.7px solid #a8a8a8;box-sizing:border-box;border-radius:1px;"></div><svg style="position:absolute;left:361.5px;top:202.4px;overflow:visible;opacity:1.0;filter:blur(0.25px);" width="7.6" height="3.6" viewBox="0 0 7.6 3.6"><path d="M0.70 1.80H2.88M0.23 3.24H2.88M0.23 0.36H3.34M0.54 0.00V3.60M2.41 0.72V3.60M0.54 3.42L1.79 1.44M4.03 1.08H7.14M4.50 0.36H6.68M4.50 3.24H6.68M4.96 0.00V3.60M6.83 0.72V3.60" stroke="#444" stroke-width="0.60" fill="none"/></svg><div style="position:absolute;left:0px;top:216.4px;width:378px;height:0.9px;background:#dcdcdc;"></div><div style="position:absolute;left:0px;top:217.3px;width:378px;height:1px;background:#f8f8f8;"></div><div style="position:absolute;left:0px;top:218.3px;width:378px;height:17.7px;background:#c0c0c0;"></div><div style="position:absolute;left:0.30000000000000004px;top:218.3px;width:137.78px;height:17.200000000000003px;background:#8c96a2;border-radius:1px;"></div><div style="position:absolute;left:0.9px;top:218.9px;width:7.3px;height:7.4px;background:#ffff00;border-radius:0.8px;"><span class="cn">1</span></div><div style="position:absolute;left:9.48px;top:218.9px;width:7.3px;height:7.4px;background:#ffffff;border-radius:0.8px;"><span class="cn">2</span></div><div style="position:absolute;left:18.06px;top:218.9px;width:7.3px;height:7.4px;background:#ffffff;border-radius:0.8px;"><span class="cn">3</span></div><div style="position:absolute;left:26.64px;top:218.9px;width:7.3px;height:7.4px;background:#ffffff;border-radius:0.8px;"><span class="cn">4</span></div><div style="position:absolute;left:35.22px;top:218.9px;width:7.3px;height:7.4px;background:#ffff00;border-radius:0.8px;"><span class="cn">5</span></div><div style="position:absolute;left:43.8px;top:218.9px;width:7.3px;height:7.4px;background:#ffffff;border-radius:0.8px;"><span class="cn">6</span></div><div style="position:absolute;left:52.38px;top:218.9px;width:7.3px;height:7.4px;background:#ffffff;border-radius:0.8px;"><span class="cn">7</span></div><div style="position:absolute;left:60.96px;top:218.9px;width:7.3px;height:7.4px;background:#ffffff;border-radius:0.8px;"><span class="cn">8</span></div><div style="position:absolute;left:69.54px;top:218.9px;width:7.3px;height:7.4px;background:#ffffff;border-radius:0.8px;"><span class="cn">9</span></div><div style="position:absolute;left:78.12px;top:218.9px;width:7.3px;height:7.4px;background:#ffffff;border-radius:0.8px;"><span class="cn">10</span></div><div style="position:absolute;left:86.7px;top:218.9px;width:7.3px;height:7.4px;background:#ffffff;border-radius:0.8px;"><span class="cn">11</span></div><div style="position:absolute;left:95.28px;top:218.9px;width:7.3px;height:7.4px;background:#ffffff;border-radius:0.8px;"><span class="cn">12</span></div><div style="position:absolute;left:103.86000000000001px;top:218.9px;width:7.3px;height:7.4px;background:#ffffff;border-radius:0.8px;"><span class="cn">13</span></div><div style="position:absolute;left:112.44000000000001px;top:218.9px;width:7.3px;height:7.4px;background:#ffffff;border-radius:0.8px;"><span class="cn">14</span></div><div style="position:absolute;left:121.02000000000001px;top:218.9px;width:7.3px;height:7.4px;background:#ffffff;border-radius:0.8px;"><span class="cn">15</span></div><div style="position:absolute;left:129.6px;top:218.9px;width:7.3px;height:7.4px;background:#ffffff;border-radius:0.8px;"><span class="cn">16</span></div><div style="position:absolute;left:0.9px;top:227.20000000000002px;width:7.3px;height:7.4px;background:#ffffff;border-radius:0.8px;"><span class="cn">17</span></div><div style="position:absolute;left:9.48px;top:227.20000000000002px;width:7.3px;height:7.4px;background:#ffffff;border-radius:0.8px;"><span class="cn">18</span></div><div style="position:absolute;left:18.06px;top:227.20000000000002px;width:7.3px;height:7.4px;background:#ffffff;border-radius:0.8px;"><span class="cn">19</span></div><div style="position:absolute;left:26.64px;top:227.20000000000002px;width:7.3px;height:7.4px;background:#ffffff;border-radius:0.8px;"><span class="cn">20</span></div><div style="position:absolute;left:35.22px;top:227.20000000000002px;width:7.3px;height:7.4px;background:#ffffff;border-radius:0.8px;"><span class="cn">21</span></div><div style="position:absolute;left:43.8px;top:227.20000000000002px;width:7.3px;height:7.4px;background:#ffffff;border-radius:0.8px;"><span class="cn">22</span></div><div style="position:absolute;left:52.38px;top:227.20000000000002px;width:7.3px;height:7.4px;background:#ffffff;border-radius:0.8px;"><span class="cn">23</span></div><div style="position:absolute;left:60.96px;top:227.20000000000002px;width:7.3px;height:7.4px;background:#ffffff;border-radius:0.8px;"><span class="cn">24</span></div><div style="position:absolute;left:69.54px;top:227.20000000000002px;width:7.3px;height:7.4px;background:#ffffff;border-radius:0.8px;"><span class="cn">25</span></div><div style="position:absolute;left:78.12px;top:227.20000000000002px;width:7.3px;height:7.4px;background:#ffffff;border-radius:0.8px;"><span class="cn">26</span></div><div style="position:absolute;left:86.7px;top:227.20000000000002px;width:7.3px;height:7.4px;background:#ffffff;border-radius:0.8px;"><span class="cn">27</span></div><div style="position:absolute;left:95.28px;top:227.20000000000002px;width:7.3px;height:7.4px;background:#ffffff;border-radius:0.8px;"><span class="cn">28</span></div><div style="position:absolute;left:103.86000000000001px;top:227.20000000000002px;width:7.3px;height:7.4px;background:#ffffff;border-radius:0.8px;"><span class="cn">29</span></div><div style="position:absolute;left:112.44000000000001px;top:227.20000000000002px;width:7.3px;height:7.4px;background:#ffffff;border-radius:0.8px;"><span class="cn">30</span></div><div style="position:absolute;left:121.02000000000001px;top:227.20000000000002px;width:7.3px;height:7.4px;background:#ffffff;border-radius:0.8px;"><span class="cn">31</span></div><div style="position:absolute;left:129.6px;top:227.20000000000002px;width:7.3px;height:7.4px;background:#ffffff;border-radius:0.8px;"><span class="cn">32</span></div><div class="t" style="left:133px;top:223.6px;font-size:5.4px;color:#2a2ae6;width:100px;text-align:center;font-weight:bold;transform:scaleX(0.74);">Count = 2;IP = 192.168.0.34</div><div class="t" style="left:133.5px;top:228.6px;font-size:5.4px;color:#2a2ae6;width:100px;text-align:center;font-weight:bold;transform:scaleX(0.78);">IP = 192.168.0.33</div><div style="position:absolute;left:238px;top:218.5px;width:140px;height:17.5px;background:#cecece;"></div><svg style="position:absolute;left:238.8px;top:221.5px;overflow:visible" width="9" height="9.2" viewBox="0 0 9 9.2"><defs><linearGradient id="g0" x1="0" y1="0" x2="1" y2="1"><stop offset="0" stop-color="#5aa4ec"/><stop offset="0.45" stop-color="#1c64c4"/><stop offset="1" stop-color="#083c96"/></linearGradient></defs><rect x="0.25" y="0.25" width="8.5" height="8.7" rx="1.6" fill="url(#g0)" stroke="#f0d8c0" stroke-width="0.5"/><path d="M4.5 1.8 C3.2 2.2 3 3.5 2.9 5 L2.2 6.6 H6.8 L6.1 5 C6 3.5 5.8 2.2 4.5 1.8Z" fill="#fff"/><path d="M3.4 6.6 C3.4 7.8 5.6 7.8 5.6 6.6" fill="#dde"/></svg><svg style="position:absolute;left:249.0px;top:224.5px;overflow:visible;opacity:1.0;filter:blur(0.15px);" width="16.0" height="4.0" viewBox="0 0 16.0 4.0"><path d="M0.24 3.60H3.03M0.73 0.40H3.03M0.24 1.20H3.52M1.88 0.00V4.00M0.57 0.00V3.20M4.24 1.20H7.52M4.24 2.80H7.52M4.73 2.00H7.03M5.88 0.80V4.00M5.22 0.00V4.00M4.57 3.80L5.88 1.60M8.73 3.60H11.52M8.24 2.80H11.52M8.24 2.00H11.52M10.54 0.00V3.20M11.19 0.80V4.00M8.57 3.80L9.88 1.60M12.24 1.20H15.52M12.73 3.60H15.03M12.73 0.40H15.52M14.54 0.80V3.20M15.19 0.00V4.00" stroke="#505050" stroke-width="0.50" fill="none"/></svg><div style="position:absolute;left:265.2px;top:219px;width:1px;height:16px;background:#dcdcdc;"></div><svg style="position:absolute;left:266.8px;top:221.5px;overflow:visible" width="9" height="9.2" viewBox="0 0 9 9.2"><defs><linearGradient id="g1" x1="0" y1="0" x2="1" y2="1"><stop offset="0" stop-color="#5aa4ec"/><stop offset="0.45" stop-color="#1c64c4"/><stop offset="1" stop-color="#083c96"/></linearGradient></defs><rect x="0.25" y="0.25" width="8.5" height="8.7" rx="1.6" fill="url(#g1)" stroke="#f0d8c0" stroke-width="0.5"/><path d="M2.6 1.8 H5.6 L6.6 2.8 V7.4 H2.6Z" fill="#fff"/><path d="M3.3 3.6 H5.8 M3.3 4.6 H5.8 M3.3 5.6 H5.8" stroke="#7aa6d8" stroke-width="0.45"/></svg><svg style="position:absolute;left:277.0px;top:224.5px;overflow:visible;opacity:1.0;filter:blur(0.15px);" width="16.0" height="4.0" viewBox="0 0 16.0 4.0"><path d="M0.73 0.40H3.03M0.24 1.20H3.03M0.73 3.60H3.03M0.57 0.00V4.00M2.54 0.00V4.00M4.73 2.00H7.52M4.73 0.40H7.52M4.73 3.60H7.52M5.88 0.80V3.20M6.54 0.80V4.00M8.24 1.20H11.52M8.24 0.40H11.03M8.24 2.00H11.03M8.57 0.00V4.00M9.88 0.00V3.20M8.57 3.80L9.88 1.60M12.24 3.60H15.52M12.24 2.80H15.03M12.73 0.40H15.52M14.54 0.80V4.00M12.57 0.00V4.00" stroke="#505050" stroke-width="0.50" fill="none"/></svg><div style="position:absolute;left:293.2px;top:219px;width:1px;height:16px;background:#dcdcdc;"></div><svg style="position:absolute;left:294.8px;top:221.5px;overflow:visible" width="9" height="9.2" viewBox="0 0 9 9.2"><defs><linearGradient id="g2" x1="0" y1="0" x2="1" y2="1"><stop offset="0" stop-color="#5aa4ec"/><stop offset="0.45" stop-color="#1c64c4"/><stop offset="1" stop-color="#083c96"/></linearGradient></defs><rect x="0.25" y="0.25" width="8.5" height="8.7" rx="1.6" fill="url(#g2)" stroke="#f0d8c0" stroke-width="0.5"/><circle cx="3.9" cy="4.1" r="2" fill="none" stroke="#fff" stroke-width="1.2"/><path d="M5.2 5.4 L7.2 7.3" stroke="#fff" stroke-width="1.4"/></svg><svg style="position:absolute;left:305.0px;top:224.5px;overflow:visible;opacity:1.0;filter:blur(0.15px);" width="16.0" height="4.0" viewBox="0 0 16.0 4.0"><path d="M0.24 0.40H3.52M0.24 2.80H3.52M0.24 1.20H3.03M1.22 0.00V4.00M0.57 0.80V4.00M4.24 2.80H7.03M4.24 1.20H7.52M4.24 0.40H7.52M7.19 0.00V3.20M6.54 0.80V4.00M8.24 2.00H11.52M8.24 3.60H11.03M8.24 0.40H11.03M9.22 0.00V4.00M8.57 0.00V4.00M8.57 3.80L9.88 1.60M12.24 1.20H15.52M12.24 2.80H15.52M12.24 3.60H15.52M13.88 0.80V4.00M14.54 0.00V4.00" stroke="#505050" stroke-width="0.50" fill="none"/></svg><div style="position:absolute;left:321.2px;top:219px;width:1px;height:16px;background:#dcdcdc;"></div><svg style="position:absolute;left:322.8px;top:221.5px;overflow:visible" width="9" height="9.2" viewBox="0 0 9 9.2"><defs><linearGradient id="g3" x1="0" y1="0" x2="1" y2="1"><stop offset="0" stop-color="#5aa4ec"/><stop offset="0.45" stop-color="#1c64c4"/><stop offset="1" stop-color="#083c96"/></linearGradient></defs><rect x="0.25" y="0.25" width="8.5" height="8.7" rx="1.6" fill="url(#g3)" stroke="#f0d8c0" stroke-width="0.5"/><path d="M4.5 1.5 L1.6 4.3 H2.5 V7.4 H6.5 V4.3 H7.4Z" fill="#fff"/><rect x="3.9" y="5.4" width="1.2" height="2" fill="#2a6ac8"/></svg><svg style="position:absolute;left:333.0px;top:224.5px;overflow:visible;opacity:1.0;filter:blur(0.15px);" width="16.0" height="4.0" viewBox="0 0 16.0 4.0"><path d="M0.24 3.60H3.03M0.24 2.80H3.52M0.24 0.40H3.52M1.88 0.00V4.00M2.54 0.00V4.00M0.57 3.80L1.88 1.60M4.24 2.00H7.03M4.24 1.20H7.52M4.24 0.40H7.52M4.57 0.00V4.00M5.88 0.00V3.20M4.57 3.80L5.88 1.60M8.24 3.60H11.52M8.24 0.40H11.52M8.24 2.80H11.03M9.22 0.00V3.20M10.54 0.00V4.00M12.24 1.20H15.52M12.24 2.00H15.52M12.24 0.40H15.03M12.57 0.00V3.20M13.22 0.00V3.20" stroke="#505050" stroke-width="0.50" fill="none"/></svg><div style="position:absolute;left:349.2px;top:219px;width:1px;height:16px;background:#dcdcdc;"></div><svg style="position:absolute;left:350.8px;top:221.5px;overflow:visible" width="9" height="9.2" viewBox="0 0 9 9.2"><defs><linearGradient id="g4" x1="0" y1="0" x2="1" y2="1"><stop offset="0" stop-color="#5aa4ec"/><stop offset="0.45" stop-color="#1c64c4"/><stop offset="1" stop-color="#083c96"/></linearGradient></defs><rect x="0.25" y="0.25" width="8.5" height="8.7" rx="1.6" fill="url(#g4)" stroke="#f0d8c0" stroke-width="0.5"/><path d="M2.4 2.2 L6.6 6.8 M6.6 2.2 L2.4 6.8" stroke="#fff" stroke-width="1.6"/></svg><svg style="position:absolute;left:361.0px;top:224.5px;overflow:visible;opacity:1.0;filter:blur(0.15px);" width="16.0" height="4.0" viewBox="0 0 16.0 4.0"><path d="M0.73 1.20H3.52M0.73 2.80H3.52M0.24 2.00H3.03M3.19 0.80V4.00M1.88 0.80V4.00M0.57 3.80L1.88 1.60M4.73 3.60H7.03M4.24 1.20H7.03M4.24 2.80H7.03M7.19 0.00V4.00M4.57 0.80V3.20M8.24 0.40H11.52M8.24 3.60H11.03M8.24 2.80H11.52M8.57 0.00V4.00M11.19 0.80V3.20M12.73 2.00H15.52M12.24 0.40H15.52M12.73 2.80H15.52M13.88 0.00V4.00M13.22 0.80V3.20M12.57 3.80L13.88 1.60" stroke="#505050" stroke-width="0.50" fill="none"/></svg></div><div class="win" style="left:112px;top:148px;"><div style="position:absolute;left:0px;top:0px;width:378px;height:236px;background:#c0c0c0;"></div><div style="position:absolute;left:0px;top:0px;width:378px;height:8.5px;background:#c0c0c0;"></div><div style="position:absolute;left:0px;top:8.2px;width:378px;height:1px;background:#e8e8e8;"></div><svg style="position:absolute;left:-0.3px;top:0.4px;overflow:visible" width="9" height="9" viewBox="0 0 9 9"><path d="M4.5 0.7 L5.1 1.6 C6.6 2 7.1 3.4 7.3 4.8 C7.5 5.9 8.1 6.5 8.7 7 L8.7 7.6 L5.7 7.6 C5.5 8.3 5.1 8.6 4.5 8.6 C3.9 8.6 3.5 8.3 3.3 7.6 L0.3 7.6 L0.3 7 C0.9 6.5 1.5 5.9 1.7 4.8 C1.9 3.4 2.4 2 3.9 1.6Z" fill="#fff000" stroke="#aab0f0" stroke-width="0.45"/></svg><div style="position:absolute;left:0px;top:9.2px;width:378px;height:103px;background:#a8a8a8;"></div><div style="position:absolute;left:1px;top:9.3px;width:187px;height:24.5px;background:#000;"></div><div style="position:absolute;left:0.7px;top:9.9px;width:7.8px;height:7.4px;border:0.8px solid #2e2e2e;box-sizing:border-box;"></div><div class="t" style="left:3.4px;top:11.9px;font-size:4.6px;color:#00c000;font-weight:bold;">1</div><div class="t" style="left:10.2px;top:12.0px;font-size:4.9px;color:#e8e800;font-weight:bold;transform:scaleX(0.8);transform-origin:0 0;">11&nbsp;&nbsp;test</div><div style="position:absolute;left:69px;top:9.8px;width:60px;height:7.6px;background:#ffee00;"></div><div style="position:absolute;left:1px;top:17.4px;width:187px;height:0.6px;background:#303030;"></div><svg style="position:absolute;left:1px;top:18.0px" width="187" height="15.8" viewBox="0 0 187 15.8"><defs><pattern id="gp3" patternUnits="userSpaceOnUse" width="4.67" height="4.67"><rect x="0" y="0" width="0.9" height="0.9" fill="#171717"/><rect x="2.335" y="0" width="0.9" height="0.9" fill="#171717"/><rect x="0" y="2.335" width="0.9" height="0.9" fill="#171717"/><rect x="2.335" y="2.335" width="0.9" height="0.9" fill="#171717" opacity="0.5"/></pattern></defs><rect width="187" height="15.8" fill="#000"/><rect width="187" height="15.8" fill="url(#gp3)"/><rect x="27.50" y="0" width="1" height="15.8" fill="#333333"/><rect x="55.50" y="0" width="1" height="15.8" fill="#333333"/><rect x="83.50" y="0" width="1" height="15.8" fill="#333333"/><rect x="111.50" y="0" width="1" height="15.8" fill="#333333"/><rect x="139.50" y="0" width="1" height="15.8" fill="#333333"/><rect x="167.50" y="0" width="1" height="15.8" fill="#333333"/></svg><div style="position:absolute;left:6px;top:22.8px;width:182px;height:0.8px;background:#0b3a0b;"></div><div style="position:absolute;left:6px;top:25.3px;width:182px;height:0.8px;background:#0b3a0b;"></div><div style="position:absolute;left:6px;top:18.3px;width:1px;height:1px;background:#c050c0;"></div><div style="position:absolute;left:1.6px;top:19.8px;width:4.5px;height:1.3px;background:#8a8a8a;opacity:.7"></div><div style="position:absolute;left:1.6px;top:22.6px;width:4.5px;height:1.3px;background:#8a8a8a;opacity:.7"></div><div style="position:absolute;left:1.6px;top:25.1px;width:4.5px;height:1.3px;background:#8a8a8a;opacity:.7"></div><div style="position:absolute;left:1.6px;top:28.3px;width:3.5px;height:1.3px;background:#8a8a8a;opacity:.7"></div><div style="position:absolute;left:1.6px;top:30.8px;width:3.5px;height:1.3px;background:#8a8a8a;opacity:.7"></div><div style="position:absolute;left:190px;top:9.3px;width:187px;height:24.5px;background:#000;"></div><div style="position:absolute;left:1px;top:35.1px;width:187px;height:24.5px;background:#000;"></div><svg style="position:absolute;left:10px;top:36.9px;overflow:visible;opacity:1.0;filter:blur(0.25px);" width="17.6" height="4.2" viewBox="0 0 17.6 4.2"><path d="M0.26 1.26H3.87M0.26 2.10H3.33M0.26 2.94H3.33M3.51 0.84V3.36M2.07 0.00V3.36M4.66 2.94H7.73M5.21 1.26H7.73M5.21 2.10H8.27M6.47 0.00V4.20M5.75 0.84V3.36M9.06 2.10H12.67M9.06 2.94H12.67M9.06 0.42H12.13M12.31 0.00V4.20M10.87 0.00V4.20M13.46 2.10H17.07M13.46 0.42H17.07M13.46 2.94H17.07M14.55 0.00V4.20M15.99 0.00V4.20M13.82 3.99L15.27 1.68" stroke="#eeee00" stroke-width="0.92" fill="none"/></svg><div style="position:absolute;left:190px;top:35.1px;width:187px;height:24.5px;background:#000;"></div><div style="position:absolute;left:1px;top:60.9px;width:187px;height:24.5px;background:#000;"></div><svg style="position:absolute;left:10px;top:62.699999999999996px;overflow:visible;opacity:1.0;filter:blur(0.25px);" width="17.6" height="4.2" viewBox="0 0 17.6 4.2"><path d="M0.81 0.42H3.87M0.26 2.94H3.87M0.81 3.78H3.33M2.79 0.00V4.20M0.62 0.00V4.20M0.62 3.99L2.07 1.68M4.66 1.26H8.27M4.66 2.10H8.27M5.21 0.42H8.27M5.02 0.00V4.20M6.47 0.00V4.20M9.61 0.42H12.67M9.61 2.10H12.67M9.06 1.26H12.13M12.31 0.00V4.20M11.59 0.00V4.20M13.46 2.94H17.07M14.01 3.78H17.07M13.46 2.10H16.53M16.71 0.00V4.20M15.99 0.00V4.20" stroke="#eeee00" stroke-width="0.92" fill="none"/></svg><div style="position:absolute;left:190px;top:60.9px;width:187px;height:24.5px;background:#000;"></div><div style="position:absolute;left:1px;top:86.7px;width:187px;height:24.5px;background:#000;"></div><svg style="position:absolute;left:10px;top:88.5px;overflow:visible;opacity:1.0;filter:blur(0.25px);" width="17.6" height="4.2" viewBox="0 0 17.6 4.2"><path d="M0.26 1.26H3.87M0.26 2.94H3.87M0.26 2.10H3.87M2.07 0.00V4.20M3.51 0.00V3.36M5.21 3.78H7.73M4.66 1.26H8.27M5.21 2.94H8.27M6.47 0.00V4.20M7.91 0.84V3.36M9.06 0.42H12.13M9.06 2.10H12.13M9.61 3.78H12.67M10.87 0.00V4.20M11.59 0.84V4.20M9.42 3.99L10.87 1.68M13.46 2.94H16.53M14.01 2.10H17.07M13.46 1.26H17.07M16.71 0.84V4.20M13.82 0.84V4.20" stroke="#eeee00" stroke-width="0.92" fill="none"/></svg><div style="position:absolute;left:190px;top:86.7px;width:187px;height:24.5px;background:#000;"></div><div style="position:absolute;left:0px;top:112.3px;width:378px;height:9px;background:#c6c6c6;"></div><svg style="position:absolute;left:1.5px;top:114.89999999999999px;overflow:visible;opacity:1.0;filter:blur(0.25px);" width="17.2" height="4" viewBox="0 0 17.2 4"><path d="M0.79 3.60H3.26M0.26 2.80H3.78M0.26 2.00H3.26M3.43 0.80V4.00M1.32 0.80V3.20M5.09 2.00H8.08M5.09 3.60H8.08M5.09 0.40H8.08M7.73 0.80V4.00M6.32 0.00V4.00M4.91 3.80L6.32 1.60M8.86 1.20H12.38M8.86 0.40H12.38M8.86 3.60H12.38M10.62 0.00V3.20M11.33 0.00V4.00M9.21 3.80L10.62 1.60M13.16 1.20H16.68M13.69 3.60H16.68M13.16 0.40H16.68M15.63 0.00V4.00M16.33 0.80V4.00M13.51 3.80L14.92 1.60" stroke="#333" stroke-width="0.88" fill="none"/></svg><div style="position:absolute;left:0px;top:120.89999999999999px;width:378px;height:0.8px;background:#ececec;"></div><div style="position:absolute;left:0px;top:121.5px;width:378px;height:10.5px;background:#f0f0f0;"></div><div style="position:absolute;left:0.5px;top:121.8px;width:32.5px;height:10px;background:#f6f6f6;"></div><svg style="position:absolute;left:10px;top:125.1px;overflow:visible;opacity:1.0;filter:blur(0.25px);" width="16.0" height="3.8" viewBox="0 0 16.0 3.8"><path d="M0.24 1.14H3.03M0.73 3.42H3.52M0.73 0.38H3.52M2.54 0.00V3.80M1.22 0.00V3.80M0.57 3.61L1.88 1.52M4.24 1.14H7.52M4.24 1.90H7.52M4.73 3.42H7.52M7.19 0.00V3.04M5.88 0.76V3.80M4.57 3.61L5.88 1.52M8.73 2.66H11.52M8.73 3.42H11.03M8.73 1.14H11.52M10.54 0.00V3.80M11.19 0.00V3.80M8.57 3.61L9.88 1.52M12.73 3.42H15.03M12.73 1.90H15.52M12.24 0.38H15.52M13.88 0.00V3.80M15.19 0.76V3.80" stroke="#aaa" stroke-width="0.84" fill="none"/></svg><div style="position:absolute;left:33.5px;top:121.8px;width:32px;height:10px;background:linear-gradient(#fafafa,#dcdcdc);border:0.7px solid #a0a0a0;box-sizing:border-box;"></div><svg style="position:absolute;left:43px;top:125.1px;overflow:visible;opacity:1.0;filter:blur(0.25px);" width="16.0" height="3.8" viewBox="0 0 16.0 3.8"><path d="M0.73 0.38H3.03M0.24 1.14H3.03M0.73 3.42H3.03M1.22 0.00V3.80M2.54 0.76V3.80M4.73 1.14H7.03M4.24 2.66H7.03M4.73 3.42H7.52M5.22 0.00V3.04M6.54 0.76V3.80M4.57 3.61L5.88 1.52M8.24 0.38H11.52M8.73 1.14H11.52M8.24 1.90H11.03M11.19 0.76V3.04M9.22 0.00V3.04M12.73 3.42H15.52M12.24 1.14H15.52M12.24 2.66H15.03M15.19 0.00V3.04M13.22 0.00V3.80" stroke="#444" stroke-width="0.84" fill="none"/></svg><div style="position:absolute;left:66.5px;top:121.8px;width:32px;height:10px;background:linear-gradient(#fafafa,#dcdcdc);border:0.7px solid #a0a0a0;box-sizing:border-box;"></div><svg style="position:absolute;left:76px;top:125.1px;overflow:visible;opacity:1.0;filter:blur(0.25px);" width="12.0" height="3.8" viewBox="0 0 12.0 3.8"><path d="M0.24 1.90H3.52M0.24 0.38H3.52M0.24 1.14H3.52M1.22 0.00V3.04M1.88 0.76V3.80M0.57 3.61L1.88 1.52M4.24 1.14H7.03M4.73 0.38H7.52M4.73 3.42H7.03M7.19 0.00V3.80M4.57 0.00V3.80M8.73 0.38H11.52M8.24 2.66H11.03M8.24 3.42H11.03M10.54 0.76V3.04M9.88 0.00V3.04M8.57 3.61L9.88 1.52" stroke="#444" stroke-width="0.84" fill="none"/></svg><div style="position:absolute;left:0px;top:131.8px;width:378px;height:85.19999999999999px;background:#000;"></div><div style="position:absolute;left:0.5px;top:132.10000000000002px;width:9.5px;height:7px;border:0.8px solid #3a3a3a;box-sizing:border-box;"></div><div class="t" style="left:3.3px;top:133.70000000000002px;font-size:4.6px;color:#00c800;font-weight:bold;">1</div><div class="t" style="left:12px;top:133.70000000000002px;font-size:4.9px;color:#e8e800;font-weight:bold;transform:scaleX(0.8);transform-origin:0 0;">11&nbsp;&nbsp;test</div><div style="position:absolute;left:0px;top:138.8px;width:315px;height:0.7px;background:#2a2a2a;"></div><svg style="position:absolute;left:0px;top:139.5px" width="315" height="48.80000000000001" viewBox="0 0 315 48.80000000000001"><defs><pattern id="gp4" patternUnits="userSpaceOnUse" width="3.94" height="3.94"><rect x="0" y="0" width="0.9" height="0.9" fill="#171717"/><rect x="1.97" y="0" width="0.9" height="0.9" fill="#171717"/><rect x="0" y="1.97" width="0.9" height="0.9" fill="#171717"/><rect x="1.97" y="1.97" width="0.9" height="0.9" fill="#171717" opacity="0.5"/></pattern></defs><rect width="315" height="48.80000000000001" fill="#000"/><rect width="315" height="48.80000000000001" fill="url(#gp4)"/><rect x="15.25" y="0" width="1" height="48.80000000000001" fill="#333333"/><rect x="31.00" y="0" width="1" height="48.80000000000001" fill="#333333"/><rect x="46.75" y="0" width="1" height="48.80000000000001" fill="#333333"/><rect x="62.50" y="0" width="1" height="48.80000000000001" fill="#333333"/><rect x="78.25" y="0" width="1" height="48.80000000000001" fill="#333333"/><rect x="94.00" y="0" width="1" height="48.80000000000001" fill="#333333"/><rect x="109.75" y="0" width="1" height="48.80000000000001" fill="#333333"/><rect x="125.50" y="0" width="1" height="48.80000000000001" fill="#333333"/><rect x="141.25" y="0" width="1" height="48.80000000000001" fill="#333333"/><rect x="157.00" y="0" width="1" height="48.80000000000001" fill="#333333"/><rect x="172.75" y="0" width="1" height="48.80000000000001" fill="#333333"/><rect x="188.50" y="0" width="1" height="48.80000000000001" fill="#333333"/><rect x="204.25" y="0" width="1" height="48.80000000000001" fill="#333333"/><rect x="220.00" y="0" width="1" height="48.80000000000001" fill="#333333"/><rect x="235.75" y="0" width="1" height="48.80000000000001" fill="#333333"/><rect x="251.50" y="0" width="1" height="48.80000000000001" fill="#333333"/><rect x="267.25" y="0" width="1" height="48.80000000000001" fill="#333333"/><rect x="283.00" y="0" width="1" height="48.80000000000001" fill="#333333"/><rect x="298.75" y="0" width="1" height="48.80000000000001" fill="#333333"/></svg><div style="position:absolute;left:0px;top:188.0px;width:315px;height:0.8px;background:#4a4a4a;"></div><svg style="position:absolute;left:0px;top:189.2px" width="315" height="27.80000000000001" viewBox="0 0 315 27.80000000000001"><defs><pattern id="gp5" patternUnits="userSpaceOnUse" width="3.94" height="3.94"><rect x="0" y="0" width="0.9" height="0.9" fill="#171717"/><rect x="1.97" y="0" width="0.9" height="0.9" fill="#171717"/><rect x="0" y="1.97" width="0.9" height="0.9" fill="#171717"/><rect x="1.97" y="1.97" width="0.9" height="0.9" fill="#171717" opacity="0.5"/></pattern></defs><rect width="315" height="27.80000000000001" fill="#000"/><rect width="315" height="27.80000000000001" fill="url(#gp5)"/><rect x="15.25" y="0" width="1" height="27.80000000000001" fill="#333333"/><rect x="31.00" y="0" width="1" height="27.80000000000001" fill="#333333"/><rect x="46.75" y="0" width="1" height="27.80000000000001" fill="#333333"/><rect x="62.50" y="0" width="1" height="27.80000000000001" fill="#333333"/><rect x="78.25" y="0" width="1" height="27.80000000000001" fill="#333333"/><rect x="94.00" y="0" width="1" height="27.80000000000001" fill="#333333"/><rect x="109.75" y="0" width="1" height="27.80000000000001" fill="#333333"/><rect x="125.50" y="0" width="1" height="27.80000000000001" fill="#333333"/><rect x="141.25" y="0" width="1" height="27.80000000000001" fill="#333333"/><rect x="157.00" y="0" width="1" height="27.80000000000001" fill="#333333"/><rect x="172.75" y="0" width="1" height="27.80000000000001" fill="#333333"/><rect x="188.50" y="0" width="1" height="27.80000000000001" fill="#333333"/><rect x="204.25" y="0" width="1" height="27.80000000000001" fill="#333333"/><rect x="220.00" y="0" width="1" height="27.80000000000001" fill="#333333"/><rect x="235.75" y="0" width="1" height="27.80000000000001" fill="#333333"/><rect x="251.50" y="0" width="1" height="27.80000000000001" fill="#333333"/><rect x="267.25" y="0" width="1" height="27.80000000000001" fill="#333333"/><rect x="283.00" y="0" width="1" height="27.80000000000001" fill="#333333"/><rect x="298.75" y="0" width="1" height="27.80000000000001" fill="#333333"/></svg><div style="position:absolute;left:314.5px;top:138.8px;width:1px;height:78.19999999999999px;background:#3a3a3a;"></div><div style="position:absolute;left:4px;top:140.7px;width:1.4px;height:3.1px;background:#a048a0;border-radius:0.6px;"></div><div style="position:absolute;left:10.5px;top:140.7px;width:1.4px;height:3.1px;background:#a048a0;border-radius:0.6px;"></div><div style="position:absolute;left:18px;top:140.7px;width:1.4px;height:3.1px;background:#a048a0;border-radius:0.6px;"></div><div style="position:absolute;left:25px;top:140.7px;width:1.4px;height:3.1px;background:#a048a0;border-radius:0.6px;"></div><div style="position:absolute;left:31px;top:140.7px;width:1.4px;height:3.1px;background:#a048a0;border-radius:0.6px;"></div><div style="position:absolute;left:34px;top:140.7px;width:1.4px;height:3.1px;background:#a048a0;border-radius:0.6px;"></div><div style="position:absolute;left:51px;top:140.7px;width:1.4px;height:3.1px;background:#a048a0;border-radius:0.6px;"></div><div style="position:absolute;left:57px;top:140.7px;width:1.4px;height:3.1px;background:#a048a0;border-radius:0.6px;"></div><div style="position:absolute;left:64px;top:140.7px;width:1.4px;height:3.1px;background:#a048a0;border-radius:0.6px;"></div><div style="position:absolute;left:71px;top:140.7px;width:1.4px;height:3.1px;background:#a048a0;border-radius:0.6px;"></div><div style="position:absolute;left:77px;top:140.7px;width:1.4px;height:3.1px;background:#a048a0;border-radius:0.6px;"></div><div style="position:absolute;left:81px;top:140.7px;width:1.4px;height:3.1px;background:#a048a0;border-radius:0.6px;"></div><div style="position:absolute;left:98px;top:140.7px;width:1.4px;height:3.1px;background:#a048a0;border-radius:0.6px;"></div><div style="position:absolute;left:104px;top:140.7px;width:1.4px;height:3.1px;background:#a048a0;border-radius:0.6px;"></div><div style="position:absolute;left:111px;top:140.7px;width:1.4px;height:3.1px;background:#a048a0;border-radius:0.6px;"></div><div style="position:absolute;left:118px;top:140.7px;width:1.4px;height:3.1px;background:#a048a0;border-radius:0.6px;"></div><div style="position:absolute;left:124px;top:140.7px;width:1.4px;height:3.1px;background:#a048a0;border-radius:0.6px;"></div><div style="position:absolute;left:145px;top:140.7px;width:1.4px;height:3.1px;background:#a048a0;border-radius:0.6px;"></div><div style="position:absolute;left:151px;top:140.7px;width:1.4px;height:3.1px;background:#a048a0;border-radius:0.6px;"></div><div style="position:absolute;left:158px;top:140.7px;width:1.4px;height:3.1px;background:#a048a0;border-radius:0.6px;"></div><div style="position:absolute;left:165px;top:140.7px;width:1.4px;height:3.1px;background:#a048a0;border-radius:0.6px;"></div><div style="position:absolute;left:171px;top:140.7px;width:1.4px;height:3.1px;background:#a048a0;border-radius:0.6px;"></div><div style="position:absolute;left:192px;top:140.7px;width:1.4px;height:3.1px;background:#a048a0;border-radius:0.6px;"></div><div style="position:absolute;left:198px;top:140.7px;width:1.4px;height:3.1px;background:#a048a0;border-radius:0.6px;"></div><div style="position:absolute;left:205px;top:140.7px;width:1.4px;height:3.1px;background:#a048a0;border-radius:0.6px;"></div><div style="position:absolute;left:212px;top:140.7px;width:1.4px;height:3.1px;background:#a048a0;border-radius:0.6px;"></div><div style="position:absolute;left:218px;top:140.7px;width:1.4px;height:3.1px;background:#a048a0;border-radius:0.6px;"></div><div style="position:absolute;left:239px;top:140.7px;width:1.4px;height:3.1px;background:#a048a0;border-radius:0.6px;"></div><div style="position:absolute;left:245px;top:140.7px;width:1.4px;height:3.1px;background:#a048a0;border-radius:0.6px;"></div><div style="position:absolute;left:252px;top:140.7px;width:1.4px;height:3.1px;background:#a048a0;border-radius:0.6px;"></div><div style="position:absolute;left:259px;top:140.7px;width:1.4px;height:3.1px;background:#a048a0;border-radius:0.6px;"></div><div style="position:absolute;left:265px;top:140.7px;width:1.4px;height:3.1px;background:#a048a0;border-radius:0.6px;"></div><div style="position:absolute;left:1px;top:146.2px;width:5px;height:1.6px;background:#8a8a8a;opacity:.8"></div><div style="position:absolute;left:1px;top:153.7px;width:5px;height:1.6px;background:#8a8a8a;opacity:.8"></div><div style="position:absolute;left:1px;top:161.2px;width:5px;height:1.6px;background:#8a8a8a;opacity:.8"></div><div style="position:absolute;left:1px;top:169.2px;width:5px;height:1.6px;background:#8a8a8a;opacity:.8"></div><div style="position:absolute;left:1px;top:177.2px;width:5px;height:1.6px;background:#8a8a8a;opacity:.8"></div><div style="position:absolute;left:1px;top:192.8px;width:4px;height:1.6px;background:#8a8a8a;opacity:.8"></div><div style="position:absolute;left:1px;top:198.09999999999997px;width:4px;height:1.6px;background:#8a8a8a;opacity:.8"></div><div style="position:absolute;left:1px;top:202.89999999999998px;width:4px;height:1.6px;background:#8a8a8a;opacity:.8"></div><div style="position:absolute;left:1px;top:208.59999999999997px;width:4px;height:1.6px;background:#8a8a8a;opacity:.8"></div><div class="t" style="left:16.75px;top:184.60000000000002px;font-size:3.3px;color:#8c9aa6;font-weight:bold;transform:scaleX(0.9);transform-origin:0 0;">16:05</div><div class="t" style="left:32.5px;top:184.60000000000002px;font-size:3.3px;color:#8c9aa6;font-weight:bold;transform:scaleX(0.9);transform-origin:0 0;">16:06</div><div class="t" style="left:48.25px;top:184.60000000000002px;font-size:3.3px;color:#8c9aa6;font-weight:bold;transform:scaleX(0.9);transform-origin:0 0;">16:07</div><div class="t" style="left:64.0px;top:184.60000000000002px;font-size:3.3px;color:#8c9aa6;font-weight:bold;transform:scaleX(0.9);transform-origin:0 0;">16:08</div><div class="t" style="left:79.75px;top:184.60000000000002px;font-size:3.3px;color:#8c9aa6;font-weight:bold;transform:scaleX(0.9);transform-origin:0 0;">16:09</div><div class="t" style="left:95.5px;top:184.60000000000002px;font-size:3.3px;color:#8c9aa6;font-weight:bold;transform:scaleX(0.9);transform-origin:0 0;">16:10</div><div class="t" style="left:111.25px;top:184.60000000000002px;font-size:3.3px;color:#8c9aa6;font-weight:bold;transform:scaleX(0.9);transform-origin:0 0;">16:11</div><div class="t" style="left:127.0px;top:184.60000000000002px;font-size:3.3px;color:#8c9aa6;font-weight:bold;transform:scaleX(0.9);transform-origin:0 0;">16:12</div><div class="t" style="left:142.75px;top:184.60000000000002px;font-size:3.3px;color:#8c9aa6;font-weight:bold;transform:scaleX(0.9);transform-origin:0 0;">16:13</div><div class="t" style="left:158.5px;top:184.60000000000002px;font-size:3.3px;color:#8c9aa6;font-weight:bold;transform:scaleX(0.9);transform-origin:0 0;">16:14</div><div class="t" style="left:174.25px;top:184.60000000000002px;font-size:3.3px;color:#8c9aa6;font-weight:bold;transform:scaleX(0.9);transform-origin:0 0;">16:15</div><div class="t" style="left:190.0px;top:184.60000000000002px;font-size:3.3px;color:#8c9aa6;font-weight:bold;transform:scaleX(0.9);transform-origin:0 0;">16:16</div><div class="t" style="left:205.75px;top:184.60000000000002px;font-size:3.3px;color:#8c9aa6;font-weight:bold;transform:scaleX(0.9);transform-origin:0 0;">16:17</div><div class="t" style="left:221.5px;top:184.60000000000002px;font-size:3.3px;color:#8c9aa6;font-weight:bold;transform:scaleX(0.9);transform-origin:0 0;">16:18</div><div class="t" style="left:237.25px;top:184.60000000000002px;font-size:3.3px;color:#8c9aa6;font-weight:bold;transform:scaleX(0.9);transform-origin:0 0;">16:19</div><div class="t" style="left:253.0px;top:184.60000000000002px;font-size:3.3px;color:#8c9aa6;font-weight:bold;transform:scaleX(0.9);transform-origin:0 0;">16:20</div><div class="t" style="left:268.75px;top:184.60000000000002px;font-size:3.3px;color:#8c9aa6;font-weight:bold;transform:scaleX(0.9);transform-origin:0 0;">16:21</div><svg style="position:absolute;left:0;top:0" width="378" height="236" viewBox="0 0 378 236"><path d="M0,157.8 L-20.0,158.10000000000002 C-17.0,158.8 -15.0,171.2 -10.0,171.7 C-6.0,172.0 -4.0,163.8 -2.0,159.8 L1.0,157.8 L3.0,157.47 L5.0,158.11 L7.0,158.04 L9.0,157.58 L11.0,157.80 L13.0,157.75 L15.0,157.94 L17.0,158.06 L19.0,157.43 L21.0,157.38 L23.0,158.10 L25.0,157.74 L27.0,158.04 L27.0,158.10000000000002 C30.0,158.8 32.0,171.2 37.0,171.7 C41.0,172.0 43.0,163.8 45.0,159.8 L48.0,157.8 L50.0,157.35 L52.0,157.75 L54.0,158.00 L56.0,157.56 L58.0,158.20 L60.0,158.16 L62.0,157.38 L64.0,157.37 L66.0,157.84 L68.0,158.20 L70.0,157.69 L72.0,157.54 L74.0,157.73 L74.0,158.10000000000002 C77.0,158.8 79.0,171.2 84.0,171.7 C88.0,172.0 90.0,163.8 92.0,159.8 L95.0,157.8 L97.0,157.38 L99.0,157.55 L101.0,157.74 L103.0,157.80 L105.0,157.56 L107.0,157.56 L109.0,157.55 L111.0,157.76 L113.0,157.61 L115.0,157.37 L117.0,158.10 L119.0,157.85 L121.0,157.93 L121.0,158.10000000000002 C124.0,158.8 126.0,171.2 131.0,171.7 C135.0,172.0 137.0,163.8 139.0,159.8 L142.0,157.8 L144.0,157.52 L146.0,158.24 L148.0,158.12 L150.0,157.46 L152.0,157.65 L154.0,158.00 L156.0,157.99 L158.0,158.19 L160.0,157.73 L162.0,158.10 L164.0,157.95 L166.0,157.62 L168.0,157.88 L168.0,158.10000000000002 C171.0,158.8 173.0,171.2 178.0,171.7 C182.0,172.0 184.0,163.8 186.0,159.8 L189.0,157.8 L191.0,158.14 L193.0,158.11 L195.0,157.80 L197.0,157.88 L199.0,157.38 L201.0,157.57 L203.0,158.07 L205.0,157.72 L207.0,157.51 L209.0,157.84 L211.0,157.98 L213.0,157.96 L215.0,157.69 L215.0,158.10000000000002 C218.0,158.8 220.0,171.2 225.0,171.7 C229.0,172.0 231.0,163.8 233.0,159.8 L236.0,157.8 L238.0,157.75 L240.0,157.81 L242.0,158.05 L244.0,157.82 L246.0,157.70 L248.0,157.79 L250.0,157.38 L252.0,157.39 L254.0,157.98 L256.0,158.23 L258.0,157.88 L260.0,157.70 L262.0,157.50 L262.0,158.10000000000002 C265.0,158.8 267.0,171.2 272.0,171.7 C276.0,172.0 278.0,163.8 280.0,159.8 L283.0,157.8" fill="none" stroke="#c01414" stroke-width="0.95"/><path d="M0,162.39999999999998 L-20.0,162.7 C-17.0,163.39999999999998 -15.0,175.3 -10.0,175.8 C-6.0,176.10000000000002 -4.0,168.39999999999998 -2.0,164.39999999999998 L1.0,162.39999999999998 L3.0,162.07 L5.0,162.71 L7.0,162.64 L9.0,162.18 L11.0,162.40 L13.0,162.35 L15.0,162.54 L17.0,162.66 L19.0,162.03 L21.0,161.98 L23.0,162.70 L25.0,162.34 L27.0,162.64 L27.0,162.7 C30.0,163.39999999999998 32.0,175.3 37.0,175.8 C41.0,176.10000000000002 43.0,168.39999999999998 45.0,164.39999999999998 L48.0,162.39999999999998 L50.0,161.95 L52.0,162.35 L54.0,162.60 L56.0,162.16 L58.0,162.80 L60.0,162.76 L62.0,161.98 L64.0,161.97 L66.0,162.44 L68.0,162.80 L70.0,162.29 L72.0,162.14 L74.0,162.33 L74.0,162.7 C77.0,163.39999999999998 79.0,175.3 84.0,175.8 C88.0,176.10000000000002 90.0,168.39999999999998 92.0,164.39999999999998 L95.0,162.39999999999998 L97.0,161.98 L99.0,162.15 L101.0,162.34 L103.0,162.40 L105.0,162.16 L107.0,162.16 L109.0,162.15 L111.0,162.36 L113.0,162.21 L115.0,161.97 L117.0,162.70 L119.0,162.45 L121.0,162.53 L121.0,162.7 C124.0,163.39999999999998 126.0,175.3 131.0,175.8 C135.0,176.10000000000002 137.0,168.39999999999998 139.0,164.39999999999998 L142.0,162.39999999999998 L144.0,162.12 L146.0,162.84 L148.0,162.72 L150.0,162.06 L152.0,162.25 L154.0,162.60 L156.0,162.59 L158.0,162.79 L160.0,162.33 L162.0,162.70 L164.0,162.55 L166.0,162.22 L168.0,162.48 L168.0,162.7 C171.0,163.39999999999998 173.0,175.3 178.0,175.8 C182.0,176.10000000000002 184.0,168.39999999999998 186.0,164.39999999999998 L189.0,162.39999999999998 L191.0,162.74 L193.0,162.71 L195.0,162.40 L197.0,162.48 L199.0,161.98 L201.0,162.17 L203.0,162.67 L205.0,162.32 L207.0,162.11 L209.0,162.44 L211.0,162.58 L213.0,162.56 L215.0,162.29 L215.0,162.7 C218.0,163.39999999999998 220.0,175.3 225.0,175.8 C229.0,176.10000000000002 231.0,168.39999999999998 233.0,164.39999999999998 L236.0,162.39999999999998 L238.0,162.35 L240.0,162.41 L242.0,162.65 L244.0,162.42 L246.0,162.30 L248.0,162.39 L250.0,161.98 L252.0,161.99 L254.0,162.58 L256.0,162.83 L258.0,162.48 L260.0,162.30 L262.0,162.10 L262.0,162.7 C265.0,163.39999999999998 267.0,175.3 272.0,175.8 C276.0,176.10000000000002 278.0,168.39999999999998 280.0,164.39999999999998 L283.0,162.39999999999998" fill="none" stroke="#d8b8c0" stroke-width="0.9"/><path d="M1,208 L1.8,204.5 L2.6,206.5 L3.4,206.7 L4.2,205.5 L5.0,206.1 L5.8,206.1 L6.6,207.4 L7.4,206.1 L8.2,208.0 L9.0,207.6 L9.8,205.8 L10.6,206.2 L11.4,205.4 L12.2,208.0 L13.0,206.9 L13.8,206.0 L14.6,202.7 L15.4,206.9 L16.2,205.3 L17.0,205.7 L17.8,206.9 L18.6,204.6 L19.4,205.6 L20.2,206.3 L21.0,207.1 L21.8,204.7 L22.6,203.5 L23.4,202.9 L24.2,205.7 L25.0,206.0 L25.8,205.1 L26.6,204.5 L27.4,205.4 L28.2,203.8 L29.0,202.1 L29.8,204.3 L30.6,204.1 L31.4,203.1 L32.2,202.3 L33.0,203.6 L33.8,203.9 L34.6,204.9 L35.4,206.6 L36.2,206.1 L37.0,208.1 L37.8,209.1 L38.6,206.7 L39.4,206.9 L40.2,209.2 L41.0,205.9 L41.8,206.0 L42.6,207.3 L43.4,204.8 L44.2,206.1 L45.0,208.3 L45.8,206.4 L46.6,203.6 L47.4,207.2 L48.2,207.1 L49.0,205.4 L49.8,206.2 L50.6,203.8 L51.4,204.0 L52.2,201.7 L53.0,203.5 L53.8,203.1 L54.6,205.3 L55.4,203.7 L56.2,204.0 L57.0,205.8 L57.8,204.1 L58.6,202.5 L59.4,203.4 L60.2,205.2 L61.0,201.8 L61.8,202.7 L62.6,200.9 L63.4,205.9 L64.2,205.5 L65.0,204.8 L65.8,207.2 L66.6,207.9 L67.4,206.4 L68.2,209.9 L69.0,209.0 L69.8,208.6 L70.6,207.6 L71.4,203.5 L72.2,206.3 L73.0,209.0 L73.8,208.7 L74.6,208.7 L75.4,205.6 L76.2,205.4 L77.0,206.9 L77.8,207.7 L78.6,206.8 L79.4,204.3 L80.2,207.5 L81.0,206.7 L81.8,204.3 L82.6,204.8 L83.4,207.2 L84.2,204.8 L85.0,205.9 L85.8,203.4 L86.6,206.4 L87.4,203.2 L88.2,206.4 L89.0,203.7 L89.8,199.3 L90.6,204.7 L91.4,205.6 L92.2,205.3 L93.0,202.5 L93.8,202.2 L94.6,204.1 L95.4,204.1 L96.2,206.8 L97.0,205.7 L97.8,208.1 L98.6,208.9 L99.4,208.0 L100.2,206.0 L101.0,203.4 L101.8,206.3 L102.6,208.4 L103.4,206.6 L104.2,207.4 L105.0,205.5 L105.8,205.9 L106.6,207.8 L107.4,206.9 L108.2,208.1 L109.0,206.8 L109.8,206.3 L110.6,205.9 L111.4,205.8 L112.2,206.6 L113.0,207.4 L113.8,205.7 L114.6,206.7 L115.4,203.7 L116.2,203.4 L117.0,203.2 L117.8,205.9 L118.6,203.3 L119.4,205.2 L120.2,205.9 L121.0,203.1 L121.8,203.7 L122.6,205.9 L123.4,202.5 L124.2,203.7 L125.0,201.5 L125.8,201.7 L126.6,201.8 L127.4,205.4 L128.2,203.8 L129.0,207.4 L129.8,205.4 L130.6,205.8 L131.4,207.0 L132.2,207.5 L133.0,208.9 L133.8,206.1 L134.6,207.7 L135.4,202.7 L136.2,206.8 L137.0,208.7 L137.8,208.0 L138.6,208.1 L139.4,208.0 L140.2,205.8 L141.0,208.0 L141.8,204.6 L142.6,204.9 L143.4,202.6 L144.2,204.9 L145.0,206.6 L145.8,205.4 L146.6,202.7 L147.4,203.2 L148.2,205.2 L149.0,204.8 L149.8,203.1 L150.6,204.3 L151.4,205.8 L152.2,204.3 L153.0,206.1 L153.8,205.3 L154.6,204.4 L155.4,201.4 L156.2,200.8 L157.0,202.2 L157.8,202.2 L158.6,206.1 L159.4,204.4 L160.2,205.2 L161.0,205.3 L161.8,206.4 L162.6,209.9 L163.4,206.8 L164.2,206.9 L165.0,205.6 L165.8,207.3 L166.6,206.1 L167.4,205.2 L168.2,205.4 L169.0,202.9 L169.8,205.7 L170.6,206.7 L171.4,207.1 L172.2,207.8 L173.0,205.5 L173.8,204.6 L174.6,203.3 L175.4,207.3 L176.2,206.5 L177.0,204.0 L177.8,205.3 L178.6,206.4 L179.4,205.4 L180.2,205.6 L181.0,201.9 L181.8,204.1 L182.6,205.8 L183.4,204.9 L184.2,204.9 L185.0,202.1 L185.8,204.9 L186.6,203.9 L187.4,201.9 L188.2,201.9 L189.0,202.7 L189.8,203.2 L190.6,206.9 L191.4,205.3 L192.2,207.2 L193.0,207.6 L193.8,206.1 L194.6,206.9 L195.4,207.0 L196.2,205.7 L197.0,206.6 L197.8,208.1 L198.6,206.4 L199.4,206.9 L200.2,205.4 L201.0,205.6 L201.8,206.0 L202.6,207.8 L203.4,206.2 L204.2,205.1 L205.0,204.9 L205.8,204.5 L206.6,207.6 L207.4,206.9 L208.2,207.1 L209.0,204.3 L209.8,203.7 L210.6,205.1 L211.4,204.2 L212.2,204.2 L213.0,203.0 L213.8,205.9 L214.6,206.1 L215.4,205.9 L216.2,203.6 L217.0,206.0 L217.8,203.3 L218.6,201.1 L219.4,204.0 L220.2,205.1 L221.0,203.1 L221.8,203.5 L222.6,207.3 L223.4,207.4 L224.2,208.5 L225.0,207.8 L225.8,206.1 L226.6,207.6 L227.4,208.2 L228.2,205.7 L229.0,205.9 L229.8,206.6 L230.6,208.1 L231.4,206.0 L232.2,206.0 L233.0,206.3 L233.8,205.2 L234.6,208.0 L235.4,205.2 L236.2,208.1 L237.0,204.6 L237.8,204.2 L238.6,204.1 L239.4,204.6 L240.2,207.0 L241.0,204.9 L241.8,205.3 L242.6,204.4 L243.4,204.0 L244.2,203.2 L245.0,205.1 L245.8,203.3 L246.6,203.3 L247.4,204.0 L248.2,205.4 L249.0,199.1 L249.8,205.3 L250.6,201.7 L251.4,204.8 L252.2,205.2 L253.0,203.5 L253.8,203.8 L254.6,206.6 L255.4,207.5 L256.2,208.4 L257.0,205.1 L257.8,206.8 L258.6,208.3 L259.4,206.1 L260.2,208.0 L261.0,205.8 L261.8,207.3 L262.6,206.6 L263.4,205.2 L264.2,206.6 L265.0,207.2 L265.8,206.4 L266.6,205.3 L267.4,207.0 L268.2,204.1 L269.0,206.6 L269.8,204.8 L270.6,207.3 L271.4,203.6 L272.2,205.0 L273.0,204.0 L273.8,206.0 L274.6,203.7 L275.4,204.0 L276.2,203.6 L277.0,205.5 L277.8,206.2 L278.6,203.0" fill="none" stroke="#3cba70" stroke-width="0.9"/><path d="M0,217.2 L0.9,215.6 L1.8,214.9 L2.7,215.5 L3.6,215.9 L4.5,215.3 L5.4,216.1 L6.3,216.1 L7.2,210.3 L8.1,214.8 L9.0,214.6 L9.9,213.8 L10.8,212.6 L11.7,215.6 L12.6,215.5 L13.5,215.5 L14.4,215.6 L15.3,214.8 L16.2,215.0 L17.1,213.4 L18.0,216.1 L18.9,215.6 L19.8,215.7 L20.7,213.8 L21.6,214.9 L22.5,214.8 L23.4,216.1 L24.3,215.1 L25.2,216.1 L26.1,214.9 L27.0,216.0 L27.9,211.1 L28.8,216.0 L29.7,211.4 L30.6,216.0 L31.5,216.0 L32.4,215.9 L33.3,214.8 L34.2,215.8 L35.1,215.9 L36.0,215.0 L36.9,216.1 L37.8,215.9 L38.7,215.1 L39.6,214.3 L40.5,215.4 L41.4,215.4 L42.3,215.6 L43.2,215.5 L44.1,214.0 L45.0,214.9 L45.9,211.4 L46.8,210.4 L47.7,215.0 L48.6,214.5 L49.5,211.5 L50.4,215.8 L51.3,215.4 L52.2,216.0 L53.1,212.2 L54.0,215.0 L54.9,215.8 L55.8,213.5 L56.7,213.9 L57.6,215.7 L58.5,216.0 L59.4,215.0 L60.3,215.3 L61.2,214.5 L62.1,216.2 L63.0,215.2 L63.9,216.2 L64.8,215.5 L65.7,215.8 L66.6,216.1 L67.5,215.2 L68.4,215.2 L69.3,215.1 L70.2,215.7 L71.1,214.9 L72.0,215.6 L72.9,215.0 L73.8,215.3 L74.7,215.4 L75.6,216.1 L76.5,214.8 L77.4,215.2 L78.3,215.2 L79.2,215.6 L80.1,216.1 L81.0,216.2 L81.9,211.6 L82.8,215.5 L83.7,214.9 L84.6,216.2 L85.5,213.9 L86.4,214.9 L87.3,215.6 L88.2,215.7 L89.1,215.9 L90.0,215.1 L90.9,215.0 L91.8,215.4 L92.7,216.0 L93.6,215.0 L94.5,215.2 L95.4,212.7 L96.3,212.8 L97.2,215.3 L98.1,215.8 L99.0,214.8 L99.9,210.8 L100.8,216.1 L101.7,215.4 L102.6,214.1 L103.5,211.0 L104.4,214.5 L105.3,215.3 L106.2,215.3 L107.1,215.1 L108.0,212.6 L108.9,212.6 L109.8,213.5 L110.7,215.7 L111.6,215.5 L112.5,215.1 L113.4,215.1 L114.3,216.1 L115.2,212.7 L116.1,215.3 L117.0,215.7 L117.9,215.0 L118.8,214.9 L119.7,211.5 L120.6,215.1 L121.5,210.7 L122.4,214.8 L123.3,215.4 L124.2,215.8 L125.1,215.0 L126.0,216.1 L126.9,215.4 L127.8,211.1 L128.7,216.1 L129.6,216.0 L130.5,214.0 L131.4,215.5 L132.3,215.0 L133.2,214.9 L134.1,213.7 L135.0,215.5 L135.9,215.2 L136.8,215.5 L137.7,215.4 L138.6,215.7 L139.5,210.9 L140.4,214.8 L141.3,212.3 L142.2,215.5 L143.1,216.2 L144.0,215.5 L144.9,215.1 L145.8,215.5 L146.7,216.1 L147.6,215.6 L148.5,214.9 L149.4,212.7 L150.3,215.1 L151.2,215.5 L152.1,215.9 L153.0,211.2 L153.9,213.7 L154.8,215.2 L155.7,215.7 L156.6,216.1 L157.5,216.0 L158.4,212.3 L159.3,215.6 L160.2,215.6 L161.1,211.9 L162.0,215.3 L162.9,215.0 L163.8,211.4 L164.7,215.1 L165.6,215.8 L166.5,210.2 L167.4,213.6 L168.3,215.2 L169.2,216.1 L170.1,215.6 L171.0,216.0 L171.9,213.8 L172.8,215.2 L173.7,212.4 L174.6,215.1 L175.5,214.4 L176.4,212.2 L177.3,215.5 L178.2,213.8 L179.1,215.0 L180.0,214.4 L180.9,214.9 L181.8,215.1 L182.7,215.5 L183.6,215.6 L184.5,216.2 L185.4,212.7 L186.3,215.2 L187.2,212.4 L188.1,216.2 L189.0,215.1 L189.9,215.0 L190.8,215.6 L191.7,215.5 L192.6,215.1 L193.5,214.9 L194.4,215.1 L195.3,215.6 L196.2,215.0 L197.1,215.1 L198.0,215.6 L198.9,216.1 L199.8,213.1 L200.7,215.3 L201.6,215.9 L202.5,215.3 L203.4,215.3 L204.3,215.5 L205.2,214.8 L206.1,215.2 L207.0,211.9 L207.9,215.2 L208.8,213.8 L209.7,213.6 L210.6,214.9 L211.5,215.5 L212.4,215.4 L213.3,215.3 L214.2,216.1 L215.1,210.5 L216.0,216.0 L216.9,216.0 L217.8,210.4 L218.7,215.6 L219.6,215.4 L220.5,215.8 L221.4,215.4 L222.3,215.2 L223.2,216.2 L224.1,211.3 L225.0,215.7 L225.9,210.3 L226.8,210.6 L227.7,215.6 L228.6,214.8 L229.5,215.5 L230.4,215.2 L231.3,214.8 L232.2,211.9 L233.1,214.5 L234.0,212.7 L234.9,215.3 L235.8,215.8 L236.7,215.6 L237.6,215.5 L238.5,214.9 L239.4,210.7 L240.3,215.1 L241.2,215.7 L242.1,215.2 L243.0,215.4 L243.9,213.6 L244.8,214.8 L245.7,214.4 L246.6,215.8 L247.5,212.3 L248.4,211.7 L249.3,215.4 L250.2,215.7 L251.1,215.9 L252.0,215.2 L252.9,211.1 L253.8,215.3 L254.7,215.9 L255.6,215.8 L256.5,215.7 L257.4,214.8 L258.3,215.4 L259.2,214.9 L260.1,210.8 L261.0,212.2 L261.9,215.5 L262.8,215.8 L263.7,211.7 L264.6,216.1 L265.5,215.2 L266.4,213.1 L267.3,215.2 L268.2,216.0 L269.1,215.4 L270.0,214.9 L270.9,215.6 L271.8,215.8 L272.7,215.6 L273.6,214.9 L274.5,215.7 L275.4,215.7 L276.3,212.2 L277.2,215.1 L278.1,215.0 L278,217.2 Z" fill="#f08a10" stroke="#ff9a20" stroke-width="0.5"/></svg><div class="t" style="left:335.6px;top:175.3px;font-size:19.5px;color:#fff0f4;letter-spacing:-0.6px;">130</div><div class="t" style="left:315.5px;top:195.8px;font-size:3.6px;color:#1a9a3a;">Pace</div><div class="t" style="left:346px;top:195.8px;font-size:3.6px;color:#d06010;">PM</div><div class="t" style="left:327.5px;top:203px;font-size:10.8px;color:#40c070;letter-spacing:-0.3px;">33</div><div class="t" style="left:356.5px;top:201.3px;font-size:15px;color:#ff8c00;letter-spacing:-0.4px;">39</div><div style="position:absolute;left:0px;top:216.6px;width:378px;height:1px;background:#b4bcc4;"></div><div style="position:absolute;left:0px;top:217.6px;width:378px;height:18.4px;background:#c0c0c0;"></div><div style="position:absolute;left:0.30000000000000004px;top:218.3px;width:137.78px;height:17.200000000000003px;background:#8c96a2;border-radius:1px;"></div><div style="position:absolute;left:0.9px;top:218.9px;width:7.3px;height:7.4px;background:#ffff00;border-radius:0.8px;"><span class="cn">1</span></div><div style="position:absolute;left:9.48px;top:218.9px;width:7.3px;height:7.4px;background:#ffffff;border-radius:0.8px;"><span class="cn">2</span></div><div style="position:absolute;left:18.06px;top:218.9px;width:7.3px;height:7.4px;background:#ffffff;border-radius:0.8px;"><span class="cn">3</span></div><div style="position:absolute;left:26.64px;top:218.9px;width:7.3px;height:7.4px;background:#ffffff;border-radius:0.8px;"><span class="cn">4</span></div><div style="position:absolute;left:35.22px;top:218.9px;width:7.3px;height:7.4px;background:#ffff00;border-radius:0.8px;"><span class="cn">5</span></div><div style="position:absolute;left:43.8px;top:218.9px;width:7.3px;height:7.4px;background:#ffffff;border-radius:0.8px;"><span class="cn">6</span></div><div style="position:absolute;left:52.38px;top:218.9px;width:7.3px;height:7.4px;background:#ffffff;border-radius:0.8px;"><span class="cn">7</span></div><div style="position:absolute;left:60.96px;top:218.9px;width:7.3px;height:7.4px;background:#ffffff;border-radius:0.8px;"><span class="cn">8</span></div><div style="position:absolute;left:69.54px;top:218.9px;width:7.3px;height:7.4px;background:#ffffff;border-radius:0.8px;"><span class="cn">9</span></div><div style="position:absolute;left:78.12px;top:218.9px;width:7.3px;height:7.4px;background:#ffffff;border-radius:0.8px;"><span class="cn">10</span></div><div style="position:absolute;left:86.7px;top:218.9px;width:7.3px;height:7.4px;background:#ffffff;border-radius:0.8px;"><span class="cn">11</span></div><div style="position:absolute;left:95.28px;top:218.9px;width:7.3px;height:7.4px;background:#ffffff;border-radius:0.8px;"><span class="cn">12</span></div><div style="position:absolute;left:103.86000000000001px;top:218.9px;width:7.3px;height:7.4px;background:#ffffff;border-radius:0.8px;"><span class="cn">13</span></div><div style="position:absolute;left:112.44000000000001px;top:218.9px;width:7.3px;height:7.4px;background:#ffffff;border-radius:0.8px;"><span class="cn">14</span></div><div style="position:absolute;left:121.02000000000001px;top:218.9px;width:7.3px;height:7.4px;background:#ffffff;border-radius:0.8px;"><span class="cn">15</span></div><div style="position:absolute;left:129.6px;top:218.9px;width:7.3px;height:7.4px;background:#ffffff;border-radius:0.8px;"><span class="cn">16</span></div><div style="position:absolute;left:0.9px;top:227.20000000000002px;width:7.3px;height:7.4px;background:#ffffff;border-radius:0.8px;"><span class="cn">17</span></div><div style="position:absolute;left:9.48px;top:227.20000000000002px;width:7.3px;height:7.4px;background:#ffffff;border-radius:0.8px;"><span class="cn">18</span></div><div style="position:absolute;left:18.06px;top:227.20000000000002px;width:7.3px;height:7.4px;background:#ffffff;border-radius:0.8px;"><span class="cn">19</span></div><div style="position:absolute;left:26.64px;top:227.20000000000002px;width:7.3px;height:7.4px;background:#ffffff;border-radius:0.8px;"><span class="cn">20</span></div><div style="position:absolute;left:35.22px;top:227.20000000000002px;width:7.3px;height:7.4px;background:#ffffff;border-radius:0.8px;"><span class="cn">21</span></div><div style="position:absolute;left:43.8px;top:227.20000000000002px;width:7.3px;height:7.4px;background:#ffffff;border-radius:0.8px;"><span class="cn">22</span></div><div style="position:absolute;left:52.38px;top:227.20000000000002px;width:7.3px;height:7.4px;background:#ffffff;border-radius:0.8px;"><span class="cn">23</span></div><div style="position:absolute;left:60.96px;top:227.20000000000002px;width:7.3px;height:7.4px;background:#ffffff;border-radius:0.8px;"><span class="cn">24</span></div><div style="position:absolute;left:69.54px;top:227.20000000000002px;width:7.3px;height:7.4px;background:#ffffff;border-radius:0.8px;"><span class="cn">25</span></div><div style="position:absolute;left:78.12px;top:227.20000000000002px;width:7.3px;height:7.4px;background:#ffffff;border-radius:0.8px;"><span class="cn">26</span></div><div style="position:absolute;left:86.7px;top:227.20000000000002px;width:7.3px;height:7.4px;background:#ffffff;border-radius:0.8px;"><span class="cn">27</span></div><div style="position:absolute;left:95.28px;top:227.20000000000002px;width:7.3px;height:7.4px;background:#ffffff;border-radius:0.8px;"><span class="cn">28</span></div><div style="position:absolute;left:103.86000000000001px;top:227.20000000000002px;width:7.3px;height:7.4px;background:#ffffff;border-radius:0.8px;"><span class="cn">29</span></div><div style="position:absolute;left:112.44000000000001px;top:227.20000000000002px;width:7.3px;height:7.4px;background:#ffffff;border-radius:0.8px;"><span class="cn">30</span></div><div style="position:absolute;left:121.02000000000001px;top:227.20000000000002px;width:7.3px;height:7.4px;background:#ffffff;border-radius:0.8px;"><span class="cn">31</span></div><div style="position:absolute;left:129.6px;top:227.20000000000002px;width:7.3px;height:7.4px;background:#ffffff;border-radius:0.8px;"><span class="cn">32</span></div><div class="t" style="left:133px;top:223.6px;font-size:5.4px;color:#2a2ae6;width:100px;text-align:center;font-weight:bold;transform:scaleX(0.74);">Count = 2;IP = 192.168.0.34</div><div class="t" style="left:133.5px;top:228.6px;font-size:5.4px;color:#2a2ae6;width:100px;text-align:center;font-weight:bold;transform:scaleX(0.78);">IP = 192.168.0.33</div><div style="position:absolute;left:238px;top:218.5px;width:140px;height:17.5px;background:#cecece;"></div><svg style="position:absolute;left:238.8px;top:221.5px;overflow:visible" width="9" height="9.2" viewBox="0 0 9 9.2"><defs><linearGradient id="g0" x1="0" y1="0" x2="1" y2="1"><stop offset="0" stop-color="#5aa4ec"/><stop offset="0.45" stop-color="#1c64c4"/><stop offset="1" stop-color="#083c96"/></linearGradient></defs><rect x="0.25" y="0.25" width="8.5" height="8.7" rx="1.6" fill="url(#g0)" stroke="#f0d8c0" stroke-width="0.5"/><path d="M4.5 1.8 C3.2 2.2 3 3.5 2.9 5 L2.2 6.6 H6.8 L6.1 5 C6 3.5 5.8 2.2 4.5 1.8Z" fill="#fff"/><path d="M3.4 6.6 C3.4 7.8 5.6 7.8 5.6 6.6" fill="#dde"/></svg><svg style="position:absolute;left:249.0px;top:224.5px;overflow:visible;opacity:1.0;filter:blur(0.15px);" width="16.0" height="4.0" viewBox="0 0 16.0 4.0"><path d="M0.73 1.20H3.52M0.24 2.80H3.03M0.73 3.60H3.52M3.19 0.80V4.00M1.88 0.00V3.20M0.57 3.80L1.88 1.60M4.24 0.40H7.03M4.24 2.80H7.52M4.24 3.60H7.03M5.88 0.00V3.20M7.19 0.00V4.00M8.24 2.80H11.52M8.73 0.40H11.52M8.24 2.00H11.03M11.19 0.80V3.20M9.88 0.00V3.20M12.24 2.00H15.03M12.24 3.60H15.52M12.24 1.20H15.52M14.54 0.80V4.00M13.22 0.00V4.00M12.57 3.80L13.88 1.60" stroke="#505050" stroke-width="0.50" fill="none"/></svg><div style="position:absolute;left:265.2px;top:219px;width:1px;height:16px;background:#dcdcdc;"></div><svg style="position:absolute;left:266.8px;top:221.5px;overflow:visible" width="9" height="9.2" viewBox="0 0 9 9.2"><defs><linearGradient id="g1" x1="0" y1="0" x2="1" y2="1"><stop offset="0" stop-color="#5aa4ec"/><stop offset="0.45" stop-color="#1c64c4"/><stop offset="1" stop-color="#083c96"/></linearGradient></defs><rect x="0.25" y="0.25" width="8.5" height="8.7" rx="1.6" fill="url(#g1)" stroke="#f0d8c0" stroke-width="0.5"/><path d="M2.6 1.8 H5.6 L6.6 2.8 V7.4 H2.6Z" fill="#fff"/><path d="M3.3 3.6 H5.8 M3.3 4.6 H5.8 M3.3 5.6 H5.8" stroke="#7aa6d8" stroke-width="0.45"/></svg><svg style="position:absolute;left:277.0px;top:224.5px;overflow:visible;opacity:1.0;filter:blur(0.15px);" width="16.0" height="4.0" viewBox="0 0 16.0 4.0"><path d="M0.24 1.20H3.52M0.24 3.60H3.03M0.24 2.80H3.52M0.57 0.00V3.20M1.88 0.00V4.00M0.57 3.80L1.88 1.60M4.24 2.80H7.52M4.24 1.20H7.52M4.24 3.60H7.52M7.19 0.00V3.20M4.57 0.00V4.00M4.57 3.80L5.88 1.60M8.24 3.60H11.52M8.24 0.40H11.03M8.73 2.80H11.03M9.88 0.00V4.00M8.57 0.00V3.20M8.57 3.80L9.88 1.60M12.24 1.20H15.03M12.73 0.40H15.03M12.24 3.60H15.52M13.22 0.00V3.20M15.19 0.80V3.20" stroke="#505050" stroke-width="0.50" fill="none"/></svg><div style="position:absolute;left:293.2px;top:219px;width:1px;height:16px;background:#dcdcdc;"></div><svg style="position:absolute;left:294.8px;top:221.5px;overflow:visible" width="9" height="9.2" viewBox="0 0 9 9.2"><defs><linearGradient id="g2" x1="0" y1="0" x2="1" y2="1"><stop offset="0" stop-color="#5aa4ec"/><stop offset="0.45" stop-color="#1c64c4"/><stop offset="1" stop-color="#083c96"/></linearGradient></defs><rect x="0.25" y="0.25" width="8.5" height="8.7" rx="1.6" fill="url(#g2)" stroke="#f0d8c0" stroke-width="0.5"/><circle cx="3.9" cy="4.1" r="2" fill="none" stroke="#fff" stroke-width="1.2"/><path d="M5.2 5.4 L7.2 7.3" stroke="#fff" stroke-width="1.4"/></svg><svg style="position:absolute;left:305.0px;top:224.5px;overflow:visible;opacity:1.0;filter:blur(0.15px);" width="16.0" height="4.0" viewBox="0 0 16.0 4.0"><path d="M0.24 0.40H3.52M0.24 2.80H3.52M0.73 2.00H3.03M1.22 0.80V4.00M2.54 0.00V4.00M0.57 3.80L1.88 1.60M4.24 1.20H7.52M4.24 2.80H7.03M4.24 0.40H7.52M5.88 0.00V4.00M6.54 0.00V3.20M4.57 3.80L5.88 1.60M8.24 2.00H11.52M8.24 2.80H11.03M8.24 1.20H11.52M9.88 0.00V3.20M9.22 0.00V4.00M8.57 3.80L9.88 1.60M12.24 0.40H15.52M12.24 3.60H15.52M12.24 2.80H15.52M13.22 0.00V3.20M13.88 0.80V4.00" stroke="#505050" stroke-width="0.50" fill="none"/></svg><div style="position:absolute;left:321.2px;top:219px;width:1px;height:16px;background:#dcdcdc;"></div><svg style="position:absolute;left:322.8px;top:221.5px;overflow:visible" width="9" height="9.2" viewBox="0 0 9 9.2"><defs><linearGradient id="g3" x1="0" y1="0" x2="1" y2="1"><stop offset="0" stop-color="#5aa4ec"/><stop offset="0.45" stop-color="#1c64c4"/><stop offset="1" stop-color="#083c96"/></linearGradient></defs><rect x="0.25" y="0.25" width="8.5" height="8.7" rx="1.6" fill="url(#g3)" stroke="#f0d8c0" stroke-width="0.5"/><path d="M4.5 1.5 L1.6 4.3 H2.5 V7.4 H6.5 V4.3 H7.4Z" fill="#fff"/><rect x="3.9" y="5.4" width="1.2" height="2" fill="#2a6ac8"/></svg><svg style="position:absolute;left:333.0px;top:224.5px;overflow:visible;opacity:1.0;filter:blur(0.15px);" width="16.0" height="4.0" viewBox="0 0 16.0 4.0"><path d="M0.73 2.80H3.52M0.24 3.60H3.03M0.24 1.20H3.03M3.19 0.00V4.00M1.88 0.00V4.00M4.24 2.80H7.52M4.24 1.20H7.52M4.73 0.40H7.52M5.88 0.80V4.00M6.54 0.80V3.20M8.73 1.20H11.03M8.24 2.80H11.52M8.24 3.60H11.03M10.54 0.80V3.20M11.19 0.00V4.00M8.57 3.80L9.88 1.60M12.24 2.80H15.52M12.24 2.00H15.03M12.24 0.40H15.52M13.88 0.80V4.00M14.54 0.00V4.00M12.57 3.80L13.88 1.60" stroke="#505050" stroke-width="0.50" fill="none"/></svg><div style="position:absolute;left:349.2px;top:219px;width:1px;height:16px;background:#dcdcdc;"></div><svg style="position:absolute;left:350.8px;top:221.5px;overflow:visible" width="9" height="9.2" viewBox="0 0 9 9.2"><defs><linearGradient id="g4" x1="0" y1="0" x2="1" y2="1"><stop offset="0" stop-color="#5aa4ec"/><stop offset="0.45" stop-color="#1c64c4"/><stop offset="1" stop-color="#083c96"/></linearGradient></defs><rect x="0.25" y="0.25" width="8.5" height="8.7" rx="1.6" fill="url(#g4)" stroke="#f0d8c0" stroke-width="0.5"/><path d="M2.4 2.2 L6.6 6.8 M6.6 2.2 L2.4 6.8" stroke="#fff" stroke-width="1.6"/></svg><svg style="position:absolute;left:361.0px;top:224.5px;overflow:visible;opacity:1.0;filter:blur(0.15px);" width="16.0" height="4.0" viewBox="0 0 16.0 4.0"><path d="M0.24 3.60H3.03M0.24 1.20H3.52M0.73 2.80H3.52M0.57 0.00V3.20M1.22 0.00V3.20M4.73 2.00H7.52M4.24 2.80H7.52M4.24 3.60H7.52M5.88 0.00V4.00M6.54 0.00V4.00M4.57 3.80L5.88 1.60M8.73 3.60H11.52M8.24 2.00H11.03M8.24 0.40H11.52M9.88 0.80V4.00M9.22 0.00V3.20M8.57 3.80L9.88 1.60M12.24 2.00H15.52M12.24 3.60H15.52M12.73 0.40H15.52M13.22 0.80V3.20M13.88 0.00V3.20M12.57 3.80L13.88 1.60" stroke="#505050" stroke-width="0.50" fill="none"/></svg></div><div class="win" style="left:194px;top:85px;"><div style="position:absolute;left:0px;top:0px;width:378px;height:236px;background:#c0c0c0;"></div><div style="position:absolute;left:0px;top:0px;width:378px;height:8.5px;background:#c0c0c0;"></div><div style="position:absolute;left:0px;top:8.2px;width:378px;height:1px;background:#e8e8e8;"></div><svg style="position:absolute;left:-0.3px;top:0.4px;overflow:visible" width="9" height="9" viewBox="0 0 9 9"><path d="M4.5 0.7 L5.1 1.6 C6.6 2 7.1 3.4 7.3 4.8 C7.5 5.9 8.1 6.5 8.7 7 L8.7 7.6 L5.7 7.6 C5.5 8.3 5.1 8.6 4.5 8.6 C3.9 8.6 3.5 8.3 3.3 7.6 L0.3 7.6 L0.3 7 C0.9 6.5 1.5 5.9 1.7 4.8 C1.9 3.4 2.4 2 3.9 1.6Z" fill="#fff000" stroke="#aab0f0" stroke-width="0.45"/></svg><div class="t" style="left:164.6px;top:2.3px;font-size:5.2px;color:#00e000;font-weight:bold;letter-spacing:-0.15px;">P6000</div><svg style="position:absolute;left:181px;top:2.4px;overflow:visible;opacity:1.0;filter:blur(0.2px);" width="31.8" height="4.6" viewBox="0 0 31.8 4.6"><path d="M0.97 0.46H4.66M0.32 2.30H4.01M0.32 3.22H4.01M2.49 0.00V3.68M3.36 0.00V3.68M5.62 1.38H9.96M5.62 0.46H9.31M5.62 2.30H9.31M7.79 0.92V3.68M8.66 0.00V4.60M11.57 1.38H15.26M10.92 0.46H15.26M10.92 4.14H15.26M14.83 0.92V3.68M13.09 0.00V3.68M11.35 4.37L13.09 1.84M16.22 4.14H19.91M16.22 2.30H20.56M16.22 3.22H20.56M16.65 0.00V4.60M19.26 0.00V4.60M21.52 0.46H25.21M21.52 4.14H25.21M22.17 3.22H25.86M23.69 0.00V3.68M24.56 0.00V3.68M21.95 4.37L23.69 1.84M27.47 2.30H30.51M27.47 1.38H30.51M26.82 4.14H30.51M29.86 0.00V4.60M27.25 0.00V3.68" stroke="#00e000" stroke-width="1.01" fill="none"/></svg><div class="t" style="left:326.7px;top:2.0px;font-size:5.8px;color:#f4f400;font-weight:bold;transform:scaleX(0.885);transform-origin:0 0;">2015-01-05 09:41:34</div><div style="position:absolute;left:0px;top:9.2px;width:378px;height:207px;background:#a8a8a8;"></div><div style="position:absolute;left:1px;top:9.2px;width:187px;height:50.5px;background:#000;"></div><div style="position:absolute;left:0.8px;top:9.799999999999999px;width:7.4px;height:7.6px;border:0.8px solid #2c2c2c;box-sizing:border-box;"></div><div class="t" style="left:3.3px;top:11.2px;font-size:5.0px;color:#00d800;font-weight:bold;">1</div><div class="t" style="left:10.6px;top:11.399999999999999px;font-size:5.0px;color:#f2f200;font-weight:bold;transform:scaleX(0.72);transform-origin:0 0;">1</div><div style="position:absolute;left:69px;top:9.799999999999999px;width:59.5px;height:7.8px;background:#ffee00;"></div><svg style="position:absolute;left:85.8px;top:11.799999999999999px;overflow:visible;opacity:1.0;filter:blur(0.25px);" width="25.2" height="3.6" viewBox="0 0 25.2 3.6"><path d="M0.25 2.52H3.70M0.25 1.08H3.70M0.25 3.24H3.70M3.35 0.00V3.60M1.29 0.72V3.60M4.45 3.24H7.90M4.45 0.36H7.90M4.97 1.08H7.38M7.55 0.00V2.88M6.17 0.00V2.88M8.65 0.36H12.10M8.65 3.24H11.58M9.17 1.80H11.58M11.75 0.72V3.60M9.69 0.00V2.88M9.00 3.42L10.37 1.44M12.85 1.08H15.78M12.85 0.36H15.78M12.85 1.80H16.30M15.26 0.00V3.60M15.95 0.00V3.60M17.57 1.08H20.50M17.05 3.24H19.98M17.57 1.80H20.50M20.15 0.00V3.60M18.77 0.00V2.88M17.40 3.42L18.77 1.44M21.25 1.80H24.18M21.77 1.08H24.18M21.25 3.24H24.70M21.60 0.00V2.88M24.35 0.00V3.60M21.60 3.42L22.97 1.44" stroke="#111" stroke-width="0.55" fill="none"/></svg><div style="position:absolute;left:1px;top:17.4px;width:140px;height:0.7px;background:#303030;"></div><svg style="position:absolute;left:1px;top:18.1px" width="140" height="27.5" viewBox="0 0 140 27.5"><defs><pattern id="gp6" patternUnits="userSpaceOnUse" width="4.67" height="4.67"><rect x="0" y="0" width="0.9" height="0.9" fill="#171717"/><rect x="2.335" y="0" width="0.9" height="0.9" fill="#171717"/><rect x="0" y="2.335" width="0.9" height="0.9" fill="#171717"/><rect x="2.335" y="2.335" width="0.9" height="0.9" fill="#171717" opacity="0.5"/></pattern></defs><rect width="140" height="27.5" fill="#000"/><rect width="140" height="27.5" fill="url(#gp6)"/><rect x="27.50" y="0" width="1" height="27.5" fill="#333333"/><rect x="55.50" y="0" width="1" height="27.5" fill="#333333"/><rect x="83.50" y="0" width="1" height="27.5" fill="#333333"/><rect x="111.50" y="0" width="1" height="27.5" fill="#333333"/></svg><div style="position:absolute;left:6px;top:26.8px;width:135px;height:0.9px;background:#0b3a0b;"></div><div style="position:absolute;left:6px;top:31.4px;width:135px;height:0.9px;background:#0b3a0b;"></div><div style="position:absolute;left:1px;top:45.5px;width:140px;height:1.4px;background:#4a4a4a;"></div><svg style="position:absolute;left:1px;top:46.900000000000006px" width="140" height="12.8" viewBox="0 0 140 12.8"><defs><pattern id="gp7" patternUnits="userSpaceOnUse" width="4.67" height="4.67"><rect x="0" y="0" width="0.9" height="0.9" fill="#171717"/><rect x="2.335" y="0" width="0.9" height="0.9" fill="#171717"/><rect x="0" y="2.335" width="0.9" height="0.9" fill="#171717"/><rect x="2.335" y="2.335" width="0.9" height="0.9" fill="#171717" opacity="0.5"/></pattern></defs><rect width="140" height="12.8" fill="#000"/><rect width="140" height="12.8" fill="url(#gp7)"/><rect x="27.50" y="0" width="1" height="12.8" fill="#333333"/><rect x="55.50" y="0" width="1" height="12.8" fill="#333333"/><rect x="83.50" y="0" width="1" height="12.8" fill="#333333"/><rect x="111.50" y="0" width="1" height="12.8" fill="#333333"/></svg><div style="position:absolute;left:140.6px;top:18.1px;width:0.9px;height:41.6px;background:#3a3a3a;"></div><div style="position:absolute;left:1.8px;top:21.4px;width:4.6px;height:1.8px;background:#b8b8b8;opacity:.75;border-radius:0.5px;"></div><div style="position:absolute;left:1.8px;top:26.0px;width:4.6px;height:1.8px;background:#b8b8b8;opacity:.75;border-radius:0.5px;"></div><div style="position:absolute;left:1.8px;top:30.6px;width:4.6px;height:1.8px;background:#b8b8b8;opacity:.75;border-radius:0.5px;"></div><div style="position:absolute;left:1.8px;top:35.199999999999996px;width:4.6px;height:1.8px;background:#b8b8b8;opacity:.75;border-radius:0.5px;"></div><div style="position:absolute;left:1.8px;top:40.0px;width:4.6px;height:1.8px;background:#b8b8b8;opacity:.75;border-radius:0.5px;"></div><div style="position:absolute;left:1.8px;top:47.300000000000004px;width:3.6px;height:1.8px;background:#a8b0b8;opacity:.7;"></div><div style="position:absolute;left:1.8px;top:51.6px;width:3.6px;height:1.8px;background:#a8b0b8;opacity:.7;"></div><div style="position:absolute;left:1.8px;top:55.699999999999996px;width:3.6px;height:1.8px;background:#a8b0b8;opacity:.7;"></div><div style="position:absolute;left:1.3px;top:57.8px;width:1.4px;height:1.6px;background:#e06010;"></div><div style="position:absolute;left:1.8px;top:18.4px;width:1.6px;height:1.4px;background:#e040e0;"></div><div class="t" style="left:141.8px;top:17.799999999999997px;font-size:3.4px;color:#00d000;font-weight:bold;transform:scaleX(0.85);transform-origin:0 0;">Pulse</div><div class="t" style="left:141.6px;top:46.400000000000006px;font-size:3.0px;color:#1a8a5a;font-weight:bold;transform:scaleX(0.85);transform-origin:0 0;">Resp</div><div class="t" style="left:150.5px;top:25.7px;font-size:18.5px;color:#00ee00;letter-spacing:-0.8px;">148</div><div class="t" style="left:148px;top:49.599999999999994px;font-size:10.0px;color:#4fb874;letter-spacing:-0.2px;">39</div><div class="t" style="left:174.2px;top:49.599999999999994px;font-size:10.0px;color:#f07a1a;">5</div><div class="t" style="left:164.2px;top:45.8px;font-size:3.0px;color:#d06000;font-weight:bold;">%</div><div style="position:absolute;left:190px;top:9.2px;width:187px;height:50.5px;background:#000;"></div><div style="position:absolute;left:189.8px;top:9.799999999999999px;width:7.4px;height:7.6px;border:0.8px solid #2c2c2c;box-sizing:border-box;"></div><div class="t" style="left:192.3px;top:11.2px;font-size:5.0px;color:#00d800;font-weight:bold;">2</div><div class="t" style="left:199.6px;top:11.399999999999999px;font-size:5.0px;color:#f2f200;font-weight:bold;transform:scaleX(0.72);transform-origin:0 0;">2</div><div style="position:absolute;left:317px;top:9.799999999999999px;width:59.5px;height:7.8px;background:#0000ff;"></div><div class="t" style="left:333px;top:12.2px;font-size:4.0px;color:#fff;font-weight:bold;">NIBP</div><div style="position:absolute;left:343.3px;top:13.799999999999999px;width:2.6px;height:0.6px;background:#fff;"></div><svg style="position:absolute;left:346.8px;top:11.799999999999999px;overflow:visible;opacity:1.0;filter:blur(0.25px);" width="12.3" height="3.8" viewBox="0 0 12.3 3.8"><path d="M0.25 3.42H3.10M0.75 0.38H3.10M0.25 2.66H3.61M2.60 0.00V3.80M3.27 0.00V3.04M0.58 3.61L1.93 1.52M4.85 3.42H7.20M4.35 1.14H7.20M4.35 1.90H7.71M4.68 0.00V3.80M7.37 0.00V3.80M8.45 1.90H11.81M8.45 1.14H11.30M8.45 0.38H11.81M11.47 0.00V3.80M10.13 0.00V3.80M8.78 3.61L10.13 1.52" stroke="#fff" stroke-width="0.65" fill="none"/></svg><div style="position:absolute;left:190px;top:17.4px;width:140px;height:0.7px;background:#303030;"></div><svg style="position:absolute;left:190px;top:18.1px" width="140" height="27.5" viewBox="0 0 140 27.5"><defs><pattern id="gp8" patternUnits="userSpaceOnUse" width="4.67" height="4.67"><rect x="0" y="0" width="0.9" height="0.9" fill="#171717"/><rect x="2.335" y="0" width="0.9" height="0.9" fill="#171717"/><rect x="0" y="2.335" width="0.9" height="0.9" fill="#171717"/><rect x="2.335" y="2.335" width="0.9" height="0.9" fill="#171717" opacity="0.5"/></pattern></defs><rect width="140" height="27.5" fill="#000"/><rect width="140" height="27.5" fill="url(#gp8)"/><rect x="27.50" y="0" width="1" height="27.5" fill="#333333"/><rect x="55.50" y="0" width="1" height="27.5" fill="#333333"/><rect x="83.50" y="0" width="1" height="27.5" fill="#333333"/><rect x="111.50" y="0" width="1" height="27.5" fill="#333333"/></svg><div style="position:absolute;left:195px;top:26.8px;width:135px;height:0.9px;background:#0b3a0b;"></div><div style="position:absolute;left:195px;top:31.4px;width:135px;height:0.9px;background:#0b3a0b;"></div><div style="position:absolute;left:190px;top:45.5px;width:140px;height:1.4px;background:#4a4a4a;"></div><svg style="position:absolute;left:190px;top:46.900000000000006px" width="140" height="12.8" viewBox="0 0 140 12.8"><defs><pattern id="gp9" patternUnits="userSpaceOnUse" width="4.67" height="4.67"><rect x="0" y="0" width="0.9" height="0.9" fill="#171717"/><rect x="2.335" y="0" width="0.9" height="0.9" fill="#171717"/><rect x="0" y="2.335" width="0.9" height="0.9" fill="#171717"/><rect x="2.335" y="2.335" width="0.9" height="0.9" fill="#171717" opacity="0.5"/></pattern></defs><rect width="140" height="12.8" fill="#000"/><rect width="140" height="12.8" fill="url(#gp9)"/><rect x="27.50" y="0" width="1" height="12.8" fill="#333333"/><rect x="55.50" y="0" width="1" height="12.8" fill="#333333"/><rect x="83.50" y="0" width="1" height="12.8" fill="#333333"/><rect x="111.50" y="0" width="1" height="12.8" fill="#333333"/></svg><div style="position:absolute;left:329.6px;top:18.1px;width:0.9px;height:41.6px;background:#3a3a3a;"></div><div style="position:absolute;left:190.8px;top:21.4px;width:4.6px;height:1.8px;background:#b8b8b8;opacity:.75;border-radius:0.5px;"></div><div style="position:absolute;left:190.8px;top:26.0px;width:4.6px;height:1.8px;background:#b8b8b8;opacity:.75;border-radius:0.5px;"></div><div style="position:absolute;left:190.8px;top:30.6px;width:4.6px;height:1.8px;background:#b8b8b8;opacity:.75;border-radius:0.5px;"></div><div style="position:absolute;left:190.8px;top:35.199999999999996px;width:4.6px;height:1.8px;background:#b8b8b8;opacity:.75;border-radius:0.5px;"></div><div style="position:absolute;left:190.8px;top:40.0px;width:4.6px;height:1.8px;background:#b8b8b8;opacity:.75;border-radius:0.5px;"></div><div style="position:absolute;left:190.8px;top:47.300000000000004px;width:3.6px;height:1.8px;background:#a8b0b8;opacity:.7;"></div><div style="position:absolute;left:190.8px;top:51.6px;width:3.6px;height:1.8px;background:#a8b0b8;opacity:.7;"></div><div style="position:absolute;left:190.8px;top:55.699999999999996px;width:3.6px;height:1.8px;background:#a8b0b8;opacity:.7;"></div><div style="position:absolute;left:190.3px;top:57.8px;width:1.4px;height:1.6px;background:#e06010;"></div><div class="t" style="left:330.8px;top:17.799999999999997px;font-size:3.4px;color:#00d000;font-weight:bold;transform:scaleX(0.85);transform-origin:0 0;">Pulse</div><div class="t" style="left:330.6px;top:46.400000000000006px;font-size:3.0px;color:#1a8a5a;font-weight:bold;transform:scaleX(0.85);transform-origin:0 0;">Resp</div><div class="t" style="left:339.5px;top:25.7px;font-size:18.5px;color:#00ee00;letter-spacing:-0.8px;">147</div><div class="t" style="left:337px;top:49.599999999999994px;font-size:10.0px;color:#4fb874;letter-spacing:-0.2px;">41</div><div class="t" style="left:363.2px;top:49.599999999999994px;font-size:10.0px;color:#f07a1a;">5</div><div class="t" style="left:353.2px;top:45.8px;font-size:3.0px;color:#d06000;font-weight:bold;">%</div><div style="position:absolute;left:1px;top:61.5px;width:187px;height:50.5px;background:#000;"></div><div style="position:absolute;left:0.8px;top:62.1px;width:7.4px;height:7.6px;border:0.8px solid #2c2c2c;box-sizing:border-box;"></div><div class="t" style="left:3.3px;top:63.5px;font-size:5.0px;color:#00d800;font-weight:bold;">5</div><div class="t" style="left:10.6px;top:63.7px;font-size:5.0px;color:#f2f200;font-weight:bold;transform:scaleX(0.72);transform-origin:0 0;">5000000000001&nbsp; yggn</div><div style="position:absolute;left:69px;top:62.1px;width:59.5px;height:7.8px;background:#ffee00;"></div><svg style="position:absolute;left:85.8px;top:64.1px;overflow:visible;opacity:1.0;filter:blur(0.25px);" width="25.2" height="3.6" viewBox="0 0 25.2 3.6"><path d="M0.25 3.24H3.70M0.77 1.80H3.70M0.77 0.36H3.18M0.60 0.00V3.60M2.66 0.72V3.60M4.45 3.24H7.38M4.97 1.80H7.90M4.45 0.36H7.90M4.80 0.00V3.60M5.49 0.72V2.88M9.17 1.08H12.10M8.65 2.52H12.10M8.65 1.80H12.10M11.06 0.00V2.88M9.00 0.00V3.60M12.85 1.80H16.30M13.37 1.08H16.30M13.37 3.24H16.30M14.57 0.00V3.60M15.26 0.00V2.88M13.20 3.42L14.57 1.44M17.57 1.08H20.50M17.57 1.80H20.50M17.05 0.36H19.98M19.46 0.72V3.60M20.15 0.00V2.88M21.25 3.24H24.18M21.25 1.80H24.70M21.25 0.36H24.18M22.97 0.00V3.60M21.60 0.00V2.88M21.60 3.42L22.97 1.44" stroke="#111" stroke-width="0.55" fill="none"/></svg><div style="position:absolute;left:1px;top:69.7px;width:140px;height:0.7px;background:#303030;"></div><svg style="position:absolute;left:1px;top:70.4px" width="140" height="27.5" viewBox="0 0 140 27.5"><defs><pattern id="gp10" patternUnits="userSpaceOnUse" width="4.67" height="4.67"><rect x="0" y="0" width="0.9" height="0.9" fill="#171717"/><rect x="2.335" y="0" width="0.9" height="0.9" fill="#171717"/><rect x="0" y="2.335" width="0.9" height="0.9" fill="#171717"/><rect x="2.335" y="2.335" width="0.9" height="0.9" fill="#171717" opacity="0.5"/></pattern></defs><rect width="140" height="27.5" fill="#000"/><rect width="140" height="27.5" fill="url(#gp10)"/><rect x="27.50" y="0" width="1" height="27.5" fill="#333333"/><rect x="55.50" y="0" width="1" height="27.5" fill="#333333"/><rect x="83.50" y="0" width="1" height="27.5" fill="#333333"/><rect x="111.50" y="0" width="1" height="27.5" fill="#333333"/></svg><div style="position:absolute;left:6px;top:79.1px;width:135px;height:0.9px;background:#0b3a0b;"></div><div style="position:absolute;left:6px;top:83.7px;width:135px;height:0.9px;background:#0b3a0b;"></div><div style="position:absolute;left:1px;top:97.8px;width:140px;height:1.4px;background:#4a4a4a;"></div><svg style="position:absolute;left:1px;top:99.2px" width="140" height="12.8" viewBox="0 0 140 12.8"><defs><pattern id="gp11" patternUnits="userSpaceOnUse" width="4.67" height="4.67"><rect x="0" y="0" width="0.9" height="0.9" fill="#171717"/><rect x="2.335" y="0" width="0.9" height="0.9" fill="#171717"/><rect x="0" y="2.335" width="0.9" height="0.9" fill="#171717"/><rect x="2.335" y="2.335" width="0.9" height="0.9" fill="#171717" opacity="0.5"/></pattern></defs><rect width="140" height="12.8" fill="#000"/><rect width="140" height="12.8" fill="url(#gp11)"/><rect x="27.50" y="0" width="1" height="12.8" fill="#333333"/><rect x="55.50" y="0" width="1" height="12.8" fill="#333333"/><rect x="83.50" y="0" width="1" height="12.8" fill="#333333"/><rect x="111.50" y="0" width="1" height="12.8" fill="#333333"/></svg><div style="position:absolute;left:140.6px;top:70.4px;width:0.9px;height:41.6px;background:#3a3a3a;"></div><div style="position:absolute;left:1.8px;top:73.69999999999999px;width:4.6px;height:1.8px;background:#b8b8b8;opacity:.75;border-radius:0.5px;"></div><div style="position:absolute;left:1.8px;top:78.3px;width:4.6px;height:1.8px;background:#b8b8b8;opacity:.75;border-radius:0.5px;"></div><div style="position:absolute;left:1.8px;top:82.89999999999999px;width:4.6px;height:1.8px;background:#b8b8b8;opacity:.75;border-radius:0.5px;"></div><div style="position:absolute;left:1.8px;top:87.5px;width:4.6px;height:1.8px;background:#b8b8b8;opacity:.75;border-radius:0.5px;"></div><div style="position:absolute;left:1.8px;top:92.3px;width:4.6px;height:1.8px;background:#b8b8b8;opacity:.75;border-radius:0.5px;"></div><div style="position:absolute;left:1.8px;top:99.6px;width:3.6px;height:1.8px;background:#a8b0b8;opacity:.7;"></div><div style="position:absolute;left:1.8px;top:103.89999999999999px;width:3.6px;height:1.8px;background:#a8b0b8;opacity:.7;"></div><div style="position:absolute;left:1.8px;top:108.0px;width:3.6px;height:1.8px;background:#a8b0b8;opacity:.7;"></div><div style="position:absolute;left:1.3px;top:110.1px;width:1.4px;height:1.6px;background:#e06010;"></div><div class="t" style="left:141.8px;top:70.1px;font-size:3.4px;color:#00d000;font-weight:bold;transform:scaleX(0.85);transform-origin:0 0;">Pulse</div><div class="t" style="left:141.6px;top:98.7px;font-size:3.0px;color:#1a8a5a;font-weight:bold;transform:scaleX(0.85);transform-origin:0 0;">Resp</div><div class="t" style="left:150.5px;top:78.0px;font-size:18.5px;color:#00ee00;letter-spacing:-0.8px;">145</div><div class="t" style="left:148px;top:101.9px;font-size:10.0px;color:#4fb874;letter-spacing:-0.2px;">33</div><div class="t" style="left:174.2px;top:101.9px;font-size:10.0px;color:#f07a1a;">6</div><div class="t" style="left:164.2px;top:98.1px;font-size:3.0px;color:#d06000;font-weight:bold;">%</div><div style="position:absolute;left:190px;top:61.5px;width:187px;height:50.5px;background:#000;"></div><svg style="position:absolute;left:199px;top:63.3px;overflow:visible;opacity:1.0;filter:blur(0.25px);" width="18.0" height="4.3" viewBox="0 0 18.0 4.3"><path d="M0.82 3.01H3.41M0.27 1.29H3.96M0.82 2.15H3.96M1.38 0.00V4.30M0.64 0.00V3.44M4.77 0.43H8.46M4.77 2.15H7.91M4.77 3.87H8.46M6.61 0.00V4.30M5.14 0.86V4.30M5.14 4.08L6.61 1.72M9.27 1.29H12.41M9.27 3.87H12.96M9.82 0.43H12.96M9.64 0.00V3.44M12.59 0.00V3.44M13.77 1.29H17.46M13.77 3.87H17.46M13.77 0.43H17.46M15.62 0.00V3.44M14.14 0.00V4.30M14.14 4.08L15.62 1.72" stroke="#eeee00" stroke-width="0.95" fill="none"/></svg><div style="position:absolute;left:1px;top:113.5px;width:187px;height:50.5px;background:#000;"></div><svg style="position:absolute;left:10px;top:115.3px;overflow:visible;opacity:1.0;filter:blur(0.25px);" width="18.0" height="4.3" viewBox="0 0 18.0 4.3"><path d="M0.27 2.15H3.96M0.27 1.29H3.96M0.27 3.01H3.41M1.38 0.00V4.30M0.64 0.00V4.30M0.64 4.08L2.12 1.72M4.77 3.87H8.46M4.77 1.29H8.46M5.32 2.15H8.46M8.09 0.86V3.44M7.35 0.86V4.30M9.27 0.43H12.96M9.82 3.87H12.96M9.27 1.29H12.96M12.59 0.00V4.30M11.85 0.00V3.44M13.77 3.87H17.46M13.77 0.43H17.46M14.32 3.01H16.91M14.88 0.00V4.30M16.35 0.86V4.30M14.14 4.08L15.62 1.72" stroke="#eeee00" stroke-width="0.95" fill="none"/></svg><div style="position:absolute;left:190px;top:113.5px;width:187px;height:50.5px;background:#000;"></div><svg style="position:absolute;left:199px;top:115.3px;overflow:visible;opacity:1.0;filter:blur(0.25px);" width="18.0" height="4.3" viewBox="0 0 18.0 4.3"><path d="M0.27 0.43H3.41M0.82 3.87H3.41M0.82 2.15H3.96M2.85 0.00V4.30M0.64 0.00V4.30M5.32 2.15H8.46M5.32 3.87H7.91M4.77 1.29H8.46M5.88 0.86V4.30M5.14 0.86V4.30M5.14 4.08L6.61 1.72M9.27 2.15H12.41M9.82 0.43H12.41M9.82 3.87H12.96M10.38 0.86V4.30M11.12 0.00V4.30M13.77 2.15H17.46M14.32 1.29H17.46M13.77 3.87H17.46M14.14 0.00V4.30M17.09 0.00V3.44M14.14 4.08L15.62 1.72" stroke="#eeee00" stroke-width="0.95" fill="none"/></svg><div style="position:absolute;left:1px;top:165.5px;width:187px;height:50.5px;background:#000;"></div><svg style="position:absolute;left:10px;top:167.3px;overflow:visible;opacity:1.0;filter:blur(0.25px);" width="18.0" height="4.3" viewBox="0 0 18.0 4.3"><path d="M0.27 0.43H3.96M0.27 2.15H3.41M0.27 3.87H3.96M0.64 0.86V4.30M1.38 0.86V4.30M0.64 4.08L2.12 1.72M5.32 3.01H8.46M4.77 0.43H7.91M5.32 2.15H7.91M5.14 0.00V3.44M5.88 0.00V3.44M5.14 4.08L6.61 1.72M9.27 3.87H12.96M9.82 3.01H12.96M9.27 1.29H12.41M11.12 0.00V4.30M9.64 0.00V4.30M14.32 1.29H16.91M13.77 2.15H16.91M13.77 3.01H16.91M16.35 0.00V4.30M14.14 0.86V4.30M14.14 4.08L15.62 1.72" stroke="#eeee00" stroke-width="0.95" fill="none"/></svg><div style="position:absolute;left:190px;top:165.5px;width:187px;height:50.5px;background:#000;"></div><svg style="position:absolute;left:199px;top:167.3px;overflow:visible;opacity:1.0;filter:blur(0.25px);" width="18.0" height="4.3" viewBox="0 0 18.0 4.3"><path d="M0.27 0.43H3.96M0.27 2.15H3.41M0.27 1.29H3.41M1.38 0.86V3.44M0.64 0.00V3.44M4.77 1.29H7.91M4.77 3.01H7.91M5.32 0.43H7.91M5.14 0.00V3.44M8.09 0.00V3.44M9.82 3.87H12.41M9.27 3.01H12.41M9.27 1.29H12.96M11.12 0.86V3.44M12.59 0.00V4.30M9.64 4.08L11.12 1.72M14.32 1.29H16.91M13.77 2.15H16.91M13.77 3.01H17.46M14.14 0.86V4.30M16.35 0.00V4.30M14.14 4.08L15.62 1.72" stroke="#eeee00" stroke-width="0.95" fill="none"/></svg><div style="position:absolute;left:0px;top:216px;width:378px;height:1.5px;background:#6e6e6e;"></div><div style="position:absolute;left:0px;top:217.5px;width:378px;height:1px;background:#e4e4e4;"></div><div style="position:absolute;left:0px;top:218.5px;width:378px;height:17.5px;background:#c0c0c0;"></div><div style="position:absolute;left:0.30000000000000004px;top:218.3px;width:137.78px;height:17.200000000000003px;background:#8c96a2;border-radius:1px;"></div><div style="position:absolute;left:0.9px;top:218.9px;width:7.3px;height:7.4px;background:#ffff00;border-radius:0.8px;"><span class="cn">1</span></div><div style="position:absolute;left:9.48px;top:218.9px;width:7.3px;height:7.4px;background:#00e000;border-radius:0.8px;"><span class="cn">2</span></div><div style="position:absolute;left:18.06px;top:218.9px;width:7.3px;height:7.4px;background:#ffffff;border-radius:0.8px;"><span class="cn">3</span></div><div style="position:absolute;left:26.64px;top:218.9px;width:7.3px;height:7.4px;background:#ffffff;border-radius:0.8px;"><span class="cn">4</span></div><div style="position:absolute;left:35.22px;top:218.9px;width:7.3px;height:7.4px;background:#ffff00;border-radius:0.8px;"><span class="cn">5</span></div><div style="position:absolute;left:43.8px;top:218.9px;width:7.3px;height:7.4px;background:#ffffff;border-radius:0.8px;"><span class="cn">6</span></div><div style="position:absolute;left:52.38px;top:218.9px;width:7.3px;height:7.4px;background:#ffffff;border-radius:0.8px;"><span class="cn">7</span></div><div style="position:absolute;left:60.96px;top:218.9px;width:7.3px;height:7.4px;background:#ffffff;border-radius:0.8px;"><span class="cn">8</span></div><div style="position:absolute;left:69.54px;top:218.9px;width:7.3px;height:7.4px;background:#ffffff;border-radius:0.8px;"><span class="cn">9</span></div><div style="position:absolute;left:78.12px;top:218.9px;width:7.3px;height:7.4px;background:#ffffff;border-radius:0.8px;"><span class="cn">10</span></div><div style="position:absolute;left:86.7px;top:218.9px;width:7.3px;height:7.4px;background:#ffffff;border-radius:0.8px;"><span class="cn">11</span></div><div style="position:absolute;left:95.28px;top:218.9px;width:7.3px;height:7.4px;background:#ffffff;border-radius:0.8px;"><span class="cn">12</span></div><div style="position:absolute;left:103.86000000000001px;top:218.9px;width:7.3px;height:7.4px;background:#ffffff;border-radius:0.8px;"><span class="cn">13</span></div><div style="position:absolute;left:112.44000000000001px;top:218.9px;width:7.3px;height:7.4px;background:#ffffff;border-radius:0.8px;"><span class="cn">14</span></div><div style="position:absolute;left:121.02000000000001px;top:218.9px;width:7.3px;height:7.4px;background:#ffffff;border-radius:0.8px;"><span class="cn">15</span></div><div style="position:absolute;left:129.6px;top:218.9px;width:7.3px;height:7.4px;background:#ffffff;border-radius:0.8px;"><span class="cn">16</span></div><div style="position:absolute;left:0.9px;top:227.20000000000002px;width:7.3px;height:7.4px;background:#ffffff;border-radius:0.8px;"><span class="cn">17</span></div><div style="position:absolute;left:9.48px;top:227.20000000000002px;width:7.3px;height:7.4px;background:#ffffff;border-radius:0.8px;"><span class="cn">18</span></div><div style="position:absolute;left:18.06px;top:227.20000000000002px;width:7.3px;height:7.4px;background:#ffffff;border-radius:0.8px;"><span class="cn">19</span></div><div style="position:absolute;left:26.64px;top:227.20000000000002px;width:7.3px;height:7.4px;background:#ffffff;border-radius:0.8px;"><span class="cn">20</span></div><div style="position:absolute;left:35.22px;top:227.20000000000002px;width:7.3px;height:7.4px;background:#ffffff;border-radius:0.8px;"><span class="cn">21</span></div><div style="position:absolute;left:43.8px;top:227.20000000000002px;width:7.3px;height:7.4px;background:#ffffff;border-radius:0.8px;"><span class="cn">22</span></div><div style="position:absolute;left:52.38px;top:227.20000000000002px;width:7.3px;height:7.4px;background:#ffffff;border-radius:0.8px;"><span class="cn">23</span></div><div style="position:absolute;left:60.96px;top:227.20000000000002px;width:7.3px;height:7.4px;background:#ffffff;border-radius:0.8px;"><span class="cn">24</span></div><div style="position:absolute;left:69.54px;top:227.20000000000002px;width:7.3px;height:7.4px;background:#ffffff;border-radius:0.8px;"><span class="cn">25</span></div><div style="position:absolute;left:78.12px;top:227.20000000000002px;width:7.3px;height:7.4px;background:#ffffff;border-radius:0.8px;"><span class="cn">26</span></div><div style="position:absolute;left:86.7px;top:227.20000000000002px;width:7.3px;height:7.4px;background:#ffffff;border-radius:0.8px;"><span class="cn">27</span></div><div style="position:absolute;left:95.28px;top:227.20000000000002px;width:7.3px;height:7.4px;background:#ffffff;border-radius:0.8px;"><span class="cn">28</span></div><div style="position:absolute;left:103.86000000000001px;top:227.20000000000002px;width:7.3px;height:7.4px;background:#ffffff;border-radius:0.8px;"><span class="cn">29</span></div><div style="position:absolute;left:112.44000000000001px;top:227.20000000000002px;width:7.3px;height:7.4px;background:#ffffff;border-radius:0.8px;"><span class="cn">30</span></div><div style="position:absolute;left:121.02000000000001px;top:227.20000000000002px;width:7.3px;height:7.4px;background:#ffffff;border-radius:0.8px;"><span class="cn">31</span></div><div style="position:absolute;left:129.6px;top:227.20000000000002px;width:7.3px;height:7.4px;background:#ffffff;border-radius:0.8px;"><span class="cn">32</span></div><div class="t" style="left:133px;top:223.6px;font-size:5.4px;color:#2a2ae6;width:100px;text-align:center;font-weight:bold;transform:scaleX(0.74);">Count = 3;IP = 192.168.0.34</div><div class="t" style="left:133.5px;top:228.6px;font-size:5.4px;color:#2a2ae6;width:100px;text-align:center;font-weight:bold;transform:scaleX(0.78);">IP = 192.168.0.36</div><div style="position:absolute;left:238px;top:218.5px;width:140px;height:17.5px;background:#cecece;"></div><svg style="position:absolute;left:238.8px;top:221.5px;overflow:visible" width="9" height="9.2" viewBox="0 0 9 9.2"><defs><linearGradient id="g0" x1="0" y1="0" x2="1" y2="1"><stop offset="0" stop-color="#5aa4ec"/><stop offset="0.45" stop-color="#1c64c4"/><stop offset="1" stop-color="#083c96"/></linearGradient></defs><rect x="0.25" y="0.25" width="8.5" height="8.7" rx="1.6" fill="url(#g0)" stroke="#f0d8c0" stroke-width="0.5"/><path d="M4.5 1.8 C3.2 2.2 3 3.5 2.9 5 L2.2 6.6 H6.8 L6.1 5 C6 3.5 5.8 2.2 4.5 1.8Z" fill="#fff"/><path d="M3.4 6.6 C3.4 7.8 5.6 7.8 5.6 6.6" fill="#dde"/></svg><svg style="position:absolute;left:249.0px;top:224.5px;overflow:visible;opacity:1.0;filter:blur(0.15px);" width="16.0" height="4.0" viewBox="0 0 16.0 4.0"><path d="M0.24 1.20H3.03M0.73 0.40H3.52M0.24 2.80H3.03M2.54 0.00V3.20M3.19 0.80V4.00M4.24 2.00H7.52M4.24 0.40H7.52M4.24 2.80H7.52M7.19 0.00V4.00M4.57 0.00V4.00M4.57 3.80L5.88 1.60M8.24 0.40H11.52M8.73 2.00H11.52M8.24 1.20H11.52M9.88 0.00V4.00M8.57 0.00V4.00M12.24 0.40H15.52M12.24 2.80H15.52M12.24 3.60H15.52M14.54 0.80V4.00M13.88 0.80V4.00M12.57 3.80L13.88 1.60" stroke="#505050" stroke-width="0.50" fill="none"/></svg><div style="position:absolute;left:265.2px;top:219px;width:1px;height:16px;background:#dcdcdc;"></div><svg style="position:absolute;left:266.8px;top:221.5px;overflow:visible" width="9" height="9.2" viewBox="0 0 9 9.2"><defs><linearGradient id="g1" x1="0" y1="0" x2="1" y2="1"><stop offset="0" stop-color="#5aa4ec"/><stop offset="0.45" stop-color="#1c64c4"/><stop offset="1" stop-color="#083c96"/></linearGradient></defs><rect x="0.25" y="0.25" width="8.5" height="8.7" rx="1.6" fill="url(#g1)" stroke="#f0d8c0" stroke-width="0.5"/><path d="M2.6 1.8 H5.6 L6.6 2.8 V7.4 H2.6Z" fill="#fff"/><path d="M3.3 3.6 H5.8 M3.3 4.6 H5.8 M3.3 5.6 H5.8" stroke="#7aa6d8" stroke-width="0.45"/></svg><svg style="position:absolute;left:277.0px;top:224.5px;overflow:visible;opacity:1.0;filter:blur(0.15px);" width="16.0" height="4.0" viewBox="0 0 16.0 4.0"><path d="M0.24 1.20H3.52M0.24 3.60H3.03M0.24 0.40H3.52M2.54 0.80V4.00M1.88 0.00V3.20M4.73 3.60H7.52M4.24 2.80H7.52M4.24 2.00H7.52M6.54 0.00V3.20M7.19 0.00V4.00M8.73 2.00H11.03M8.73 2.80H11.03M8.24 0.40H11.03M9.88 0.80V4.00M9.22 0.80V3.20M12.73 1.20H15.52M12.24 2.00H15.03M12.73 3.60H15.03M12.57 0.00V4.00M15.19 0.00V4.00M12.57 3.80L13.88 1.60" stroke="#505050" stroke-width="0.50" fill="none"/></svg><div style="position:absolute;left:293.2px;top:219px;width:1px;height:16px;background:#dcdcdc;"></div><svg style="position:absolute;left:294.8px;top:221.5px;overflow:visible" width="9" height="9.2" viewBox="0 0 9 9.2"><defs><linearGradient id="g2" x1="0" y1="0" x2="1" y2="1"><stop offset="0" stop-color="#5aa4ec"/><stop offset="0.45" stop-color="#1c64c4"/><stop offset="1" stop-color="#083c96"/></linearGradient></defs><rect x="0.25" y="0.25" width="8.5" height="8.7" rx="1.6" fill="url(#g2)" stroke="#f0d8c0" stroke-width="0.5"/><circle cx="3.9" cy="4.1" r="2" fill="none" stroke="#fff" stroke-width="1.2"/><path d="M5.2 5.4 L7.2 7.3" stroke="#fff" stroke-width="1.4"/></svg><svg style="position:absolute;left:305.0px;top:224.5px;overflow:visible;opacity:1.0;filter:blur(0.15px);" width="16.0" height="4.0" viewBox="0 0 16.0 4.0"><path d="M0.73 0.40H3.03M0.73 2.80H3.03M0.24 1.20H3.52M1.22 0.00V3.20M0.57 0.00V4.00M0.57 3.80L1.88 1.60M4.24 1.20H7.52M4.24 0.40H7.52M4.24 3.60H7.52M4.57 0.00V4.00M7.19 0.00V3.20M8.24 2.00H11.52M8.24 2.80H11.03M8.73 1.20H11.03M10.54 0.00V3.20M11.19 0.80V4.00M8.57 3.80L9.88 1.60M12.24 2.00H15.52M12.73 2.80H15.03M12.24 3.60H15.52M13.22 0.80V4.00M15.19 0.00V3.20M12.57 3.80L13.88 1.60" stroke="#505050" stroke-width="0.50" fill="none"/></svg><div style="position:absolute;left:321.2px;top:219px;width:1px;height:16px;background:#dcdcdc;"></div><svg style="position:absolute;left:322.8px;top:221.5px;overflow:visible" width="9" height="9.2" viewBox="0 0 9 9.2"><defs><linearGradient id="g3" x1="0" y1="0" x2="1" y2="1"><stop offset="0" stop-color="#5aa4ec"/><stop offset="0.45" stop-color="#1c64c4"/><stop offset="1" stop-color="#083c96"/></linearGradient></defs><rect x="0.25" y="0.25" width="8.5" height="8.7" rx="1.6" fill="url(#g3)" stroke="#f0d8c0" stroke-width="0.5"/><path d="M4.5 1.5 L1.6 4.3 H2.5 V7.4 H6.5 V4.3 H7.4Z" fill="#fff"/><rect x="3.9" y="5.4" width="1.2" height="2" fill="#2a6ac8"/></svg><svg style="position:absolute;left:333.0px;top:224.5px;overflow:visible;opacity:1.0;filter:blur(0.15px);" width="16.0" height="4.0" viewBox="0 0 16.0 4.0"><path d="M0.24 2.00H3.52M0.73 0.40H3.52M0.24 2.80H3.52M1.88 0.00V4.00M2.54 0.80V4.00M4.24 2.00H7.52M4.24 3.60H7.52M4.24 0.40H7.03M5.22 0.00V3.20M7.19 0.00V3.20M4.57 3.80L5.88 1.60M8.24 1.20H11.52M8.73 3.60H11.52M8.73 2.00H11.03M8.57 0.00V3.20M11.19 0.00V4.00M8.57 3.80L9.88 1.60M12.24 2.80H15.52M12.24 1.20H15.52M12.73 2.00H15.52M13.22 0.80V4.00M14.54 0.00V4.00" stroke="#505050" stroke-width="0.50" fill="none"/></svg><div style="position:absolute;left:349.2px;top:219px;width:1px;height:16px;background:#dcdcdc;"></div><svg style="position:absolute;left:350.8px;top:221.5px;overflow:visible" width="9" height="9.2" viewBox="0 0 9 9.2"><defs><linearGradient id="g4" x1="0" y1="0" x2="1" y2="1"><stop offset="0" stop-color="#5aa4ec"/><stop offset="0.45" stop-color="#1c64c4"/><stop offset="1" stop-color="#083c96"/></linearGradient></defs><rect x="0.25" y="0.25" width="8.5" height="8.7" rx="1.6" fill="url(#g4)" stroke="#f0d8c0" stroke-width="0.5"/><path d="M2.4 2.2 L6.6 6.8 M6.6 2.2 L2.4 6.8" stroke="#fff" stroke-width="1.6"/></svg><svg style="position:absolute;left:361.0px;top:224.5px;overflow:visible;opacity:1.0;filter:blur(0.15px);" width="16.0" height="4.0" viewBox="0 0 16.0 4.0"><path d="M0.24 0.40H3.52M0.24 2.80H3.52M0.24 3.60H3.03M2.54 0.00V3.20M0.57 0.80V4.00M4.73 3.60H7.03M4.73 2.00H7.52M4.73 1.20H7.52M5.88 0.00V4.00M6.54 0.80V4.00M4.57 3.80L5.88 1.60M8.24 3.60H11.03M8.24 0.40H11.52M8.73 2.80H11.03M8.57 0.00V4.00M10.54 0.00V4.00M8.57 3.80L9.88 1.60M12.24 0.40H15.52M12.24 1.20H15.52M12.73 2.80H15.52M14.54 0.00V4.00M12.57 0.00V4.00" stroke="#505050" stroke-width="0.50" fill="none"/></svg></div></body></html>
